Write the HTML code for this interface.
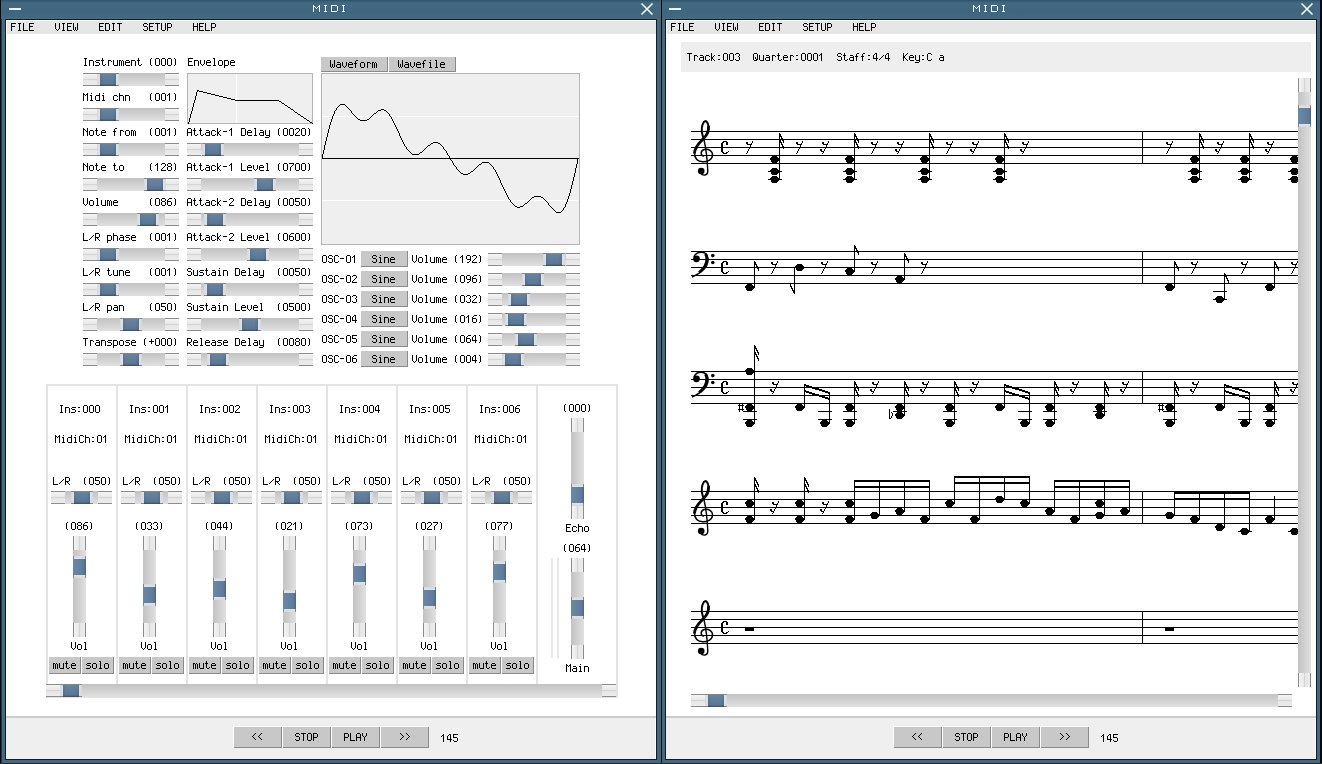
<!DOCTYPE html><html><head><meta charset="utf-8"><style>
*{margin:0;padding:0;box-sizing:content-box}
html,body{width:1322px;height:764px;overflow:hidden;background:#46687f;position:relative}
div{position:absolute}
.cap{border-top:1px solid #8c8c8c;border-bottom:1px solid #8c8c8c;background:linear-gradient(#f4f4f4 0%,#e8e8e8 45%,#d4d4d4 50%,#e6e6e6 55%,#ececec 100%)}
.vcap{border-left:1px solid #8c8c8c;border-right:1px solid #8c8c8c;background:linear-gradient(90deg,#f4f4f4 0%,#e8e8e8 45%,#d4d4d4 50%,#e6e6e6 55%,#ececec 100%)}
.knob{border-top:1px solid #858585;border-bottom:1px solid #858585;background:linear-gradient(90deg,#d4dae0,#eef2f6 35%,#eef2f6 65%,#d4dae0)}
.knob i{position:absolute;left:3px;top:0;width:16px;height:calc(100% + 1px);background:linear-gradient(90deg,rgba(0,0,0,.08),rgba(0,0,0,0) 20%,rgba(0,0,0,0) 80%,rgba(0,0,0,.1)),linear-gradient(#6683a0,#5b7794 80%,#4d627b 92%,#3a4555)}
.vknob{border-left:1px solid #858585;border-right:1px solid #858585;background:linear-gradient(#d4dae0,#eef2f6 35%,#eef2f6 65%,#d4dae0)}
.vknob i{position:absolute;top:3px;left:-1px;height:16px;width:calc(100% + 2px);background:linear-gradient(90deg,#6a88a6,#5f7b99 80%,#4e6480)}
.btn{background:#c8c8c8;border-right:1px solid #8a8a8a;border-bottom:1px solid #8a8a8a;box-shadow:-1px -1px 0 #fff}
</style></head><body><div style="left:0px;top:0px;width:1px;height:764px;background:#05080b;"></div>
<div style="left:661px;top:0px;width:1px;height:764px;background:#05080b;"></div>
<div style="left:1320px;top:0px;width:2px;height:764px;background:#05080b;"></div>
<div style="left:0px;top:763px;width:1322px;height:1px;background:#1c2d3a;"></div>
<div style="left:1px;top:0px;width:1px;height:764px;background:#22394a;"></div>
<div style="left:1px;top:0px;width:659px;height:19px;background:linear-gradient(#2c516b 0px,#3f637c 2px,#45697f 4px,#40667f 10px,#42677f 17px,#4e6c81 19px);"></div>
<div style="left:5px;top:19px;width:652px;height:741px;background:#0d1d29;"></div>
<div style="left:6px;top:20px;width:650px;height:739px;background:#ffffff;"></div>
<div style="left:7px;top:21px;width:649px;height:13px;background:#e6e6e6;"></div>
<div style="left:9px;top:8px;width:12px;height:2px;background:#e6fbff;"></div>
<div style="left:6px;top:716px;width:650px;height:2px;background:#cccccc;"></div>
<div style="left:6px;top:718px;width:649px;height:41px;background:#efefef;"></div>
<div class="btn" style="left:234px;top:727px;width:47px;height:20px"></div>
<div class="btn" style="left:283px;top:727px;width:47px;height:20px"></div>
<div class="btn" style="left:332px;top:727px;width:47px;height:20px"></div>
<div class="btn" style="left:381px;top:727px;width:47px;height:20px"></div>
<div style="left:662px;top:0px;width:658px;height:19px;background:linear-gradient(#2c516b 0px,#3f637c 2px,#45697f 4px,#40667f 10px,#42677f 17px,#4e6c81 19px);"></div>
<div style="left:665px;top:19px;width:652px;height:741px;background:#0d1d29;"></div>
<div style="left:666px;top:20px;width:650px;height:739px;background:#ffffff;"></div>
<div style="left:667px;top:21px;width:649px;height:13px;background:#e6e6e6;"></div>
<div style="left:669px;top:8px;width:12px;height:2px;background:#e6fbff;"></div>
<div style="left:666px;top:716px;width:650px;height:2px;background:#cccccc;"></div>
<div style="left:666px;top:718px;width:649px;height:41px;background:#efefef;"></div>
<div class="btn" style="left:894px;top:727px;width:47px;height:20px"></div>
<div class="btn" style="left:943px;top:727px;width:47px;height:20px"></div>
<div class="btn" style="left:992px;top:727px;width:47px;height:20px"></div>
<div class="btn" style="left:1041px;top:727px;width:47px;height:20px"></div>
<svg style="position:absolute;left:0;top:0" width="1322" height="20"><path d="M641.5 3.5 L652.5 14.5 M652.5 3.5 L641.5 14.5 M1301.5 3.5 L1312.5 14.5 M1312.5 3.5 L1301.5 14.5" stroke="#f2ffff" stroke-width="1.6"/></svg>
<div style="left:83px;top:73px;width:96px;height:13px;background:linear-gradient(#c2c2c2,#e0e0e0);"></div>
<div class="cap" style="left:83px;top:73px;width:14px;height:11px"></div>
<div class="cap" style="left:165px;top:73px;width:14px;height:11px"></div>
<div class="knob" style="left:97px;top:73px;width:22px;height:11px"><i></i></div>
<div style="left:83px;top:108px;width:96px;height:13px;background:linear-gradient(#c2c2c2,#e0e0e0);"></div>
<div class="cap" style="left:83px;top:108px;width:14px;height:11px"></div>
<div class="cap" style="left:165px;top:108px;width:14px;height:11px"></div>
<div class="knob" style="left:97px;top:108px;width:22px;height:11px"><i></i></div>
<div style="left:83px;top:143px;width:96px;height:13px;background:linear-gradient(#c2c2c2,#e0e0e0);"></div>
<div class="cap" style="left:83px;top:143px;width:14px;height:11px"></div>
<div class="cap" style="left:165px;top:143px;width:14px;height:11px"></div>
<div class="knob" style="left:97px;top:143px;width:22px;height:11px"><i></i></div>
<div style="left:83px;top:178px;width:96px;height:13px;background:linear-gradient(#c2c2c2,#e0e0e0);"></div>
<div class="cap" style="left:83px;top:178px;width:14px;height:11px"></div>
<div class="cap" style="left:165px;top:178px;width:14px;height:11px"></div>
<div class="knob" style="left:144px;top:178px;width:22px;height:11px"><i></i></div>
<div style="left:83px;top:213px;width:96px;height:13px;background:linear-gradient(#c2c2c2,#e0e0e0);"></div>
<div class="cap" style="left:83px;top:213px;width:14px;height:11px"></div>
<div class="cap" style="left:165px;top:213px;width:14px;height:11px"></div>
<div class="knob" style="left:137px;top:213px;width:22px;height:11px"><i></i></div>
<div style="left:83px;top:248px;width:96px;height:13px;background:linear-gradient(#c2c2c2,#e0e0e0);"></div>
<div class="cap" style="left:83px;top:248px;width:14px;height:11px"></div>
<div class="cap" style="left:165px;top:248px;width:14px;height:11px"></div>
<div class="knob" style="left:97px;top:248px;width:22px;height:11px"><i></i></div>
<div style="left:83px;top:283px;width:96px;height:13px;background:linear-gradient(#c2c2c2,#e0e0e0);"></div>
<div class="cap" style="left:83px;top:283px;width:14px;height:11px"></div>
<div class="cap" style="left:165px;top:283px;width:14px;height:11px"></div>
<div class="knob" style="left:97px;top:283px;width:22px;height:11px"><i></i></div>
<div style="left:83px;top:318px;width:96px;height:13px;background:linear-gradient(#c2c2c2,#e0e0e0);"></div>
<div class="cap" style="left:83px;top:318px;width:14px;height:11px"></div>
<div class="cap" style="left:165px;top:318px;width:14px;height:11px"></div>
<div class="knob" style="left:120px;top:318px;width:22px;height:11px"><i></i></div>
<div style="left:83px;top:353px;width:96px;height:13px;background:linear-gradient(#c2c2c2,#e0e0e0);"></div>
<div class="cap" style="left:83px;top:353px;width:14px;height:11px"></div>
<div class="cap" style="left:165px;top:353px;width:14px;height:11px"></div>
<div class="knob" style="left:120px;top:353px;width:22px;height:11px"><i></i></div>
<div style="left:187px;top:143px;width:126px;height:13px;background:linear-gradient(#c2c2c2,#e0e0e0);"></div>
<div class="cap" style="left:187px;top:143px;width:14px;height:11px"></div>
<div class="cap" style="left:299px;top:143px;width:14px;height:11px"></div>
<div class="knob" style="left:202px;top:143px;width:22px;height:11px"><i></i></div>
<div style="left:187px;top:178px;width:126px;height:13px;background:linear-gradient(#c2c2c2,#e0e0e0);"></div>
<div class="cap" style="left:187px;top:178px;width:14px;height:11px"></div>
<div class="cap" style="left:299px;top:178px;width:14px;height:11px"></div>
<div class="knob" style="left:254px;top:178px;width:22px;height:11px"><i></i></div>
<div style="left:187px;top:213px;width:126px;height:13px;background:linear-gradient(#c2c2c2,#e0e0e0);"></div>
<div class="cap" style="left:187px;top:213px;width:14px;height:11px"></div>
<div class="cap" style="left:299px;top:213px;width:14px;height:11px"></div>
<div class="knob" style="left:204px;top:213px;width:22px;height:11px"><i></i></div>
<div style="left:187px;top:248px;width:126px;height:13px;background:linear-gradient(#c2c2c2,#e0e0e0);"></div>
<div class="cap" style="left:187px;top:248px;width:14px;height:11px"></div>
<div class="cap" style="left:299px;top:248px;width:14px;height:11px"></div>
<div class="knob" style="left:247px;top:248px;width:22px;height:11px"><i></i></div>
<div style="left:187px;top:283px;width:126px;height:13px;background:linear-gradient(#c2c2c2,#e0e0e0);"></div>
<div class="cap" style="left:187px;top:283px;width:14px;height:11px"></div>
<div class="cap" style="left:299px;top:283px;width:14px;height:11px"></div>
<div class="knob" style="left:204px;top:283px;width:22px;height:11px"><i></i></div>
<div style="left:187px;top:318px;width:126px;height:13px;background:linear-gradient(#c2c2c2,#e0e0e0);"></div>
<div class="cap" style="left:187px;top:318px;width:14px;height:11px"></div>
<div class="cap" style="left:299px;top:318px;width:14px;height:11px"></div>
<div class="knob" style="left:239px;top:318px;width:22px;height:11px"><i></i></div>
<div style="left:187px;top:353px;width:126px;height:13px;background:linear-gradient(#c2c2c2,#e0e0e0);"></div>
<div class="cap" style="left:187px;top:353px;width:14px;height:11px"></div>
<div class="cap" style="left:299px;top:353px;width:14px;height:11px"></div>
<div class="knob" style="left:207px;top:353px;width:22px;height:11px"><i></i></div>
<div style="left:187px;top:73px;width:124px;height:49px;background:#efefef;border:1px solid #b4b4b4"></div>
<div style="left:236px;top:74px;width:1px;height:49px;background:#ffffff;"></div>
<div class="btn" style="left:321px;top:57px;width:66px;height:14px"></div>
<div class="btn" style="left:389px;top:57px;width:66px;height:14px"></div>
<div style="left:321px;top:73px;width:257px;height:170px;background:#efefef;border:1px solid #b4b4b4"></div>
<div style="left:322px;top:116px;width:257px;height:1px;background:#ffffff;"></div>
<div style="left:322px;top:200px;width:257px;height:1px;background:#ffffff;"></div>
<div class="btn" style="left:361px;top:251px;width:46px;height:15px"></div>
<div style="left:488px;top:253px;width:92px;height:13px;background:linear-gradient(#c2c2c2,#e0e0e0);"></div>
<div class="cap" style="left:488px;top:253px;width:14px;height:11px"></div>
<div class="cap" style="left:566px;top:253px;width:14px;height:11px"></div>
<div class="knob" style="left:543px;top:253px;width:22px;height:11px"><i></i></div>
<div class="btn" style="left:361px;top:271px;width:46px;height:15px"></div>
<div style="left:488px;top:273px;width:92px;height:13px;background:linear-gradient(#c2c2c2,#e0e0e0);"></div>
<div class="cap" style="left:488px;top:273px;width:14px;height:11px"></div>
<div class="cap" style="left:566px;top:273px;width:14px;height:11px"></div>
<div class="knob" style="left:522px;top:273px;width:22px;height:11px"><i></i></div>
<div class="btn" style="left:361px;top:291px;width:46px;height:15px"></div>
<div style="left:488px;top:293px;width:92px;height:13px;background:linear-gradient(#c2c2c2,#e0e0e0);"></div>
<div class="cap" style="left:488px;top:293px;width:14px;height:11px"></div>
<div class="cap" style="left:566px;top:293px;width:14px;height:11px"></div>
<div class="knob" style="left:508px;top:293px;width:22px;height:11px"><i></i></div>
<div class="btn" style="left:361px;top:311px;width:46px;height:15px"></div>
<div style="left:488px;top:313px;width:92px;height:13px;background:linear-gradient(#c2c2c2,#e0e0e0);"></div>
<div class="cap" style="left:488px;top:313px;width:14px;height:11px"></div>
<div class="cap" style="left:566px;top:313px;width:14px;height:11px"></div>
<div class="knob" style="left:505px;top:313px;width:22px;height:11px"><i></i></div>
<div class="btn" style="left:361px;top:331px;width:46px;height:15px"></div>
<div style="left:488px;top:333px;width:92px;height:13px;background:linear-gradient(#c2c2c2,#e0e0e0);"></div>
<div class="cap" style="left:488px;top:333px;width:14px;height:11px"></div>
<div class="cap" style="left:566px;top:333px;width:14px;height:11px"></div>
<div class="knob" style="left:515px;top:333px;width:22px;height:11px"><i></i></div>
<div class="btn" style="left:361px;top:351px;width:46px;height:15px"></div>
<div style="left:488px;top:353px;width:92px;height:13px;background:linear-gradient(#c2c2c2,#e0e0e0);"></div>
<div class="cap" style="left:488px;top:353px;width:14px;height:11px"></div>
<div class="cap" style="left:566px;top:353px;width:14px;height:11px"></div>
<div class="knob" style="left:502px;top:353px;width:22px;height:11px"><i></i></div>
<div style="left:46px;top:384px;width:568px;height:310px;background:#ffffff;border:2px solid #e4e4e4"></div>
<div style="left:51px;top:491px;width:61px;height:13px;background:linear-gradient(#c2c2c2,#e0e0e0);"></div>
<div class="cap" style="left:51px;top:491px;width:14px;height:11px"></div>
<div class="cap" style="left:98px;top:491px;width:14px;height:11px"></div>
<div class="knob" style="left:71px;top:491px;width:22px;height:11px"><i></i></div>
<div style="left:73px;top:536px;width:13px;height:101px;background:linear-gradient(90deg,#c2c2c2,#e0e0e0);"></div>
<div class="vcap" style="left:73px;top:536px;width:11px;height:14px"></div>
<div class="vcap" style="left:73px;top:623px;width:11px;height:14px"></div>
<div class="vknob" style="left:73px;top:556px;width:11px;height:22px"><i></i></div>
<div class="btn" style="left:49px;top:657px;width:31px;height:16px"></div>
<div class="btn" style="left:82px;top:657px;width:31px;height:16px"></div>
<div style="left:116px;top:386px;width:2px;height:298px;background:#e4e4e4;"></div>
<div style="left:121px;top:491px;width:61px;height:13px;background:linear-gradient(#c2c2c2,#e0e0e0);"></div>
<div class="cap" style="left:121px;top:491px;width:14px;height:11px"></div>
<div class="cap" style="left:168px;top:491px;width:14px;height:11px"></div>
<div class="knob" style="left:141px;top:491px;width:22px;height:11px"><i></i></div>
<div style="left:143px;top:536px;width:13px;height:101px;background:linear-gradient(90deg,#c2c2c2,#e0e0e0);"></div>
<div class="vcap" style="left:143px;top:536px;width:11px;height:14px"></div>
<div class="vcap" style="left:143px;top:623px;width:11px;height:14px"></div>
<div class="vknob" style="left:143px;top:584px;width:11px;height:22px"><i></i></div>
<div class="btn" style="left:119px;top:657px;width:31px;height:16px"></div>
<div class="btn" style="left:152px;top:657px;width:31px;height:16px"></div>
<div style="left:186px;top:386px;width:2px;height:298px;background:#e4e4e4;"></div>
<div style="left:191px;top:491px;width:61px;height:13px;background:linear-gradient(#c2c2c2,#e0e0e0);"></div>
<div class="cap" style="left:191px;top:491px;width:14px;height:11px"></div>
<div class="cap" style="left:238px;top:491px;width:14px;height:11px"></div>
<div class="knob" style="left:211px;top:491px;width:22px;height:11px"><i></i></div>
<div style="left:213px;top:536px;width:13px;height:101px;background:linear-gradient(90deg,#c2c2c2,#e0e0e0);"></div>
<div class="vcap" style="left:213px;top:536px;width:11px;height:14px"></div>
<div class="vcap" style="left:213px;top:623px;width:11px;height:14px"></div>
<div class="vknob" style="left:213px;top:578px;width:11px;height:22px"><i></i></div>
<div class="btn" style="left:189px;top:657px;width:31px;height:16px"></div>
<div class="btn" style="left:222px;top:657px;width:31px;height:16px"></div>
<div style="left:256px;top:386px;width:2px;height:298px;background:#e4e4e4;"></div>
<div style="left:261px;top:491px;width:61px;height:13px;background:linear-gradient(#c2c2c2,#e0e0e0);"></div>
<div class="cap" style="left:261px;top:491px;width:14px;height:11px"></div>
<div class="cap" style="left:308px;top:491px;width:14px;height:11px"></div>
<div class="knob" style="left:281px;top:491px;width:22px;height:11px"><i></i></div>
<div style="left:283px;top:536px;width:13px;height:101px;background:linear-gradient(90deg,#c2c2c2,#e0e0e0);"></div>
<div class="vcap" style="left:283px;top:536px;width:11px;height:14px"></div>
<div class="vcap" style="left:283px;top:623px;width:11px;height:14px"></div>
<div class="vknob" style="left:283px;top:590px;width:11px;height:22px"><i></i></div>
<div class="btn" style="left:259px;top:657px;width:31px;height:16px"></div>
<div class="btn" style="left:292px;top:657px;width:31px;height:16px"></div>
<div style="left:326px;top:386px;width:2px;height:298px;background:#e4e4e4;"></div>
<div style="left:331px;top:491px;width:61px;height:13px;background:linear-gradient(#c2c2c2,#e0e0e0);"></div>
<div class="cap" style="left:331px;top:491px;width:14px;height:11px"></div>
<div class="cap" style="left:378px;top:491px;width:14px;height:11px"></div>
<div class="knob" style="left:351px;top:491px;width:22px;height:11px"><i></i></div>
<div style="left:353px;top:536px;width:13px;height:101px;background:linear-gradient(90deg,#c2c2c2,#e0e0e0);"></div>
<div class="vcap" style="left:353px;top:536px;width:11px;height:14px"></div>
<div class="vcap" style="left:353px;top:623px;width:11px;height:14px"></div>
<div class="vknob" style="left:353px;top:563px;width:11px;height:22px"><i></i></div>
<div class="btn" style="left:329px;top:657px;width:31px;height:16px"></div>
<div class="btn" style="left:362px;top:657px;width:31px;height:16px"></div>
<div style="left:396px;top:386px;width:2px;height:298px;background:#e4e4e4;"></div>
<div style="left:401px;top:491px;width:61px;height:13px;background:linear-gradient(#c2c2c2,#e0e0e0);"></div>
<div class="cap" style="left:401px;top:491px;width:14px;height:11px"></div>
<div class="cap" style="left:448px;top:491px;width:14px;height:11px"></div>
<div class="knob" style="left:421px;top:491px;width:22px;height:11px"><i></i></div>
<div style="left:423px;top:536px;width:13px;height:101px;background:linear-gradient(90deg,#c2c2c2,#e0e0e0);"></div>
<div class="vcap" style="left:423px;top:536px;width:11px;height:14px"></div>
<div class="vcap" style="left:423px;top:623px;width:11px;height:14px"></div>
<div class="vknob" style="left:423px;top:587px;width:11px;height:22px"><i></i></div>
<div class="btn" style="left:399px;top:657px;width:31px;height:16px"></div>
<div class="btn" style="left:432px;top:657px;width:31px;height:16px"></div>
<div style="left:466px;top:386px;width:2px;height:298px;background:#e4e4e4;"></div>
<div style="left:471px;top:491px;width:61px;height:13px;background:linear-gradient(#c2c2c2,#e0e0e0);"></div>
<div class="cap" style="left:471px;top:491px;width:14px;height:11px"></div>
<div class="cap" style="left:518px;top:491px;width:14px;height:11px"></div>
<div class="knob" style="left:491px;top:491px;width:22px;height:11px"><i></i></div>
<div style="left:493px;top:536px;width:13px;height:101px;background:linear-gradient(90deg,#c2c2c2,#e0e0e0);"></div>
<div class="vcap" style="left:493px;top:536px;width:11px;height:14px"></div>
<div class="vcap" style="left:493px;top:623px;width:11px;height:14px"></div>
<div class="vknob" style="left:493px;top:561px;width:11px;height:22px"><i></i></div>
<div class="btn" style="left:469px;top:657px;width:31px;height:16px"></div>
<div class="btn" style="left:502px;top:657px;width:31px;height:16px"></div>
<div style="left:536px;top:386px;width:2px;height:298px;background:#e4e4e4;"></div>
<div style="left:571px;top:418px;width:13px;height:101px;background:linear-gradient(90deg,#c2c2c2,#e0e0e0);"></div>
<div class="vcap" style="left:571px;top:418px;width:11px;height:14px"></div>
<div class="vcap" style="left:571px;top:505px;width:11px;height:14px"></div>
<div class="vknob" style="left:571px;top:484px;width:11px;height:22px"><i></i></div>
<div style="left:571px;top:558px;width:13px;height:101px;background:linear-gradient(90deg,#c2c2c2,#e0e0e0);"></div>
<div class="vcap" style="left:571px;top:558px;width:11px;height:14px"></div>
<div class="vcap" style="left:571px;top:645px;width:11px;height:14px"></div>
<div class="vknob" style="left:571px;top:597px;width:11px;height:22px"><i></i></div>
<div style="left:551px;top:558px;width:2px;height:100px;background:#e8e8e8;"></div>
<div style="left:557px;top:558px;width:2px;height:100px;background:#e8e8e8;"></div>
<div style="left:46px;top:684px;width:570px;height:13px;background:linear-gradient(#c2c2c2,#e0e0e0);"></div>
<div class="cap" style="left:46px;top:684px;width:14px;height:11px"></div>
<div class="cap" style="left:602px;top:684px;width:14px;height:11px"></div>
<div class="knob" style="left:60px;top:684px;width:22px;height:11px"><i></i></div>
<svg style="position:absolute;left:0;top:0" width="1322" height="764"><path shape-rendering="crispEdges" fill="#000" d="M691 131h607v1h-607zM1142 132h1v1h-1zM779 133h1v1h-1zM854 133h1v1h-1zM929 133h1v1h-1zM1004 133h1v1h-1zM1142 133h1v1h-1zM1199 133h1v1h-1zM1249 133h1v1h-1zM779 134h2v1h-2zM854 134h2v1h-2zM929 134h2v1h-2zM1004 134h2v1h-2zM1142 134h1v1h-1zM1199 134h2v1h-2zM1249 134h2v1h-2zM779 135h2v1h-2zM854 135h2v1h-2zM929 135h2v1h-2zM1004 135h2v1h-2zM1142 135h1v1h-1zM1199 135h2v1h-2zM1249 135h2v1h-2zM779 136h3v1h-3zM854 136h3v1h-3zM929 136h3v1h-3zM1004 136h3v1h-3zM1142 136h1v1h-1zM1199 136h3v1h-3zM1249 136h3v1h-3zM779 137h1v1h-1zM781 137h1v1h-1zM854 137h1v1h-1zM856 137h1v1h-1zM929 137h1v1h-1zM931 137h1v1h-1zM1004 137h1v1h-1zM1006 137h1v1h-1zM1142 137h1v1h-1zM1199 137h1v1h-1zM1201 137h1v1h-1zM1249 137h1v1h-1zM1251 137h1v1h-1zM779 138h1v1h-1zM781 138h2v1h-2zM854 138h1v1h-1zM856 138h2v1h-2zM929 138h1v1h-1zM931 138h2v1h-2zM1004 138h1v1h-1zM1006 138h2v1h-2zM1142 138h1v1h-1zM1199 138h1v1h-1zM1201 138h2v1h-2zM1249 138h1v1h-1zM1251 138h2v1h-2zM691 139h607v1h-607zM779 140h2v1h-2zM782 140h2v1h-2zM854 140h2v1h-2zM857 140h2v1h-2zM929 140h2v1h-2zM932 140h2v1h-2zM1004 140h2v1h-2zM1007 140h2v1h-2zM1142 140h1v1h-1zM1199 140h2v1h-2zM1202 140h2v1h-2zM1249 140h2v1h-2zM1252 140h2v1h-2zM723 141h4v1h-4zM752 141h1v1h-1zM779 141h2v1h-2zM783 141h1v1h-1zM802 141h1v1h-1zM828 141h1v1h-1zM854 141h2v1h-2zM858 141h1v1h-1zM877 141h1v1h-1zM903 141h1v1h-1zM929 141h2v1h-2zM933 141h1v1h-1zM952 141h1v1h-1zM978 141h1v1h-1zM1004 141h2v1h-2zM1008 141h1v1h-1zM1028 141h1v1h-1zM1142 141h1v1h-1zM1172 141h1v1h-1zM1199 141h2v1h-2zM1203 141h1v1h-1zM1223 141h1v1h-1zM1249 141h2v1h-2zM1253 141h1v1h-1zM1273 141h1v1h-1zM722 142h2v1h-2zM726 142h2v1h-2zM746 142h2v1h-2zM752 142h1v1h-1zM779 142h3v1h-3zM783 142h1v1h-1zM796 142h2v1h-2zM802 142h1v1h-1zM822 142h2v1h-2zM828 142h1v1h-1zM854 142h3v1h-3zM858 142h1v1h-1zM871 142h2v1h-2zM877 142h1v1h-1zM897 142h2v1h-2zM903 142h1v1h-1zM929 142h3v1h-3zM933 142h1v1h-1zM946 142h2v1h-2zM952 142h1v1h-1zM972 142h2v1h-2zM978 142h1v1h-1zM1004 142h3v1h-3zM1008 142h1v1h-1zM1022 142h2v1h-2zM1028 142h1v1h-1zM1142 142h1v1h-1zM1166 142h2v1h-2zM1172 142h1v1h-1zM1199 142h3v1h-3zM1203 142h1v1h-1zM1217 142h2v1h-2zM1223 142h1v1h-1zM1249 142h3v1h-3zM1253 142h1v1h-1zM1267 142h2v1h-2zM1273 142h1v1h-1zM721 143h2v1h-2zM726 143h2v1h-2zM746 143h2v1h-2zM751 143h1v1h-1zM779 143h1v1h-1zM781 143h1v1h-1zM796 143h2v1h-2zM801 143h1v1h-1zM822 143h2v1h-2zM827 143h1v1h-1zM854 143h1v1h-1zM856 143h1v1h-1zM871 143h2v1h-2zM876 143h1v1h-1zM897 143h2v1h-2zM902 143h1v1h-1zM929 143h1v1h-1zM931 143h1v1h-1zM946 143h2v1h-2zM951 143h1v1h-1zM972 143h2v1h-2zM977 143h1v1h-1zM1004 143h1v1h-1zM1006 143h1v1h-1zM1022 143h2v1h-2zM1027 143h1v1h-1zM1142 143h1v1h-1zM1166 143h2v1h-2zM1171 143h1v1h-1zM1199 143h1v1h-1zM1201 143h1v1h-1zM1217 143h2v1h-2zM1222 143h1v1h-1zM1249 143h1v1h-1zM1251 143h1v1h-1zM1267 143h2v1h-2zM1272 143h1v1h-1zM721 144h2v1h-2zM726 144h2v1h-2zM747 144h5v1h-5zM779 144h1v1h-1zM781 144h2v1h-2zM797 144h5v1h-5zM823 144h5v1h-5zM854 144h1v1h-1zM856 144h2v1h-2zM872 144h5v1h-5zM898 144h5v1h-5zM929 144h1v1h-1zM931 144h2v1h-2zM947 144h5v1h-5zM973 144h5v1h-5zM1004 144h1v1h-1zM1006 144h2v1h-2zM1023 144h5v1h-5zM1142 144h1v1h-1zM1167 144h5v1h-5zM1199 144h1v1h-1zM1201 144h2v1h-2zM1218 144h5v1h-5zM1249 144h1v1h-1zM1251 144h2v1h-2zM1268 144h5v1h-5zM721 145h2v1h-2zM750 145h1v1h-1zM779 145h1v1h-1zM782 145h1v1h-1zM800 145h1v1h-1zM826 145h1v1h-1zM854 145h1v1h-1zM857 145h1v1h-1zM875 145h1v1h-1zM901 145h1v1h-1zM929 145h1v1h-1zM932 145h1v1h-1zM950 145h1v1h-1zM976 145h1v1h-1zM1004 145h1v1h-1zM1007 145h1v1h-1zM1026 145h1v1h-1zM1142 145h1v1h-1zM1170 145h1v1h-1zM1199 145h1v1h-1zM1202 145h1v1h-1zM1221 145h1v1h-1zM1249 145h1v1h-1zM1252 145h1v1h-1zM1271 145h1v1h-1zM721 146h2v1h-2zM750 146h1v1h-1zM779 146h1v1h-1zM782 146h2v1h-2zM800 146h1v1h-1zM826 146h1v1h-1zM854 146h1v1h-1zM857 146h2v1h-2zM875 146h1v1h-1zM901 146h1v1h-1zM929 146h1v1h-1zM932 146h2v1h-2zM950 146h1v1h-1zM976 146h1v1h-1zM1004 146h1v1h-1zM1007 146h2v1h-2zM1026 146h1v1h-1zM1142 146h1v1h-1zM1170 146h1v1h-1zM1199 146h1v1h-1zM1202 146h2v1h-2zM1221 146h1v1h-1zM1249 146h1v1h-1zM1252 146h2v1h-2zM1271 146h1v1h-1zM691 147h607v1h-607zM721 148h2v1h-2zM749 148h1v1h-1zM779 148h1v1h-1zM783 148h1v1h-1zM799 148h1v1h-1zM825 148h1v1h-1zM854 148h1v1h-1zM858 148h1v1h-1zM874 148h1v1h-1zM900 148h1v1h-1zM929 148h1v1h-1zM933 148h1v1h-1zM949 148h1v1h-1zM975 148h1v1h-1zM1004 148h1v1h-1zM1008 148h1v1h-1zM1025 148h1v1h-1zM1142 148h1v1h-1zM1169 148h1v1h-1zM1199 148h1v1h-1zM1203 148h1v1h-1zM1220 148h1v1h-1zM1249 148h1v1h-1zM1253 148h1v1h-1zM1270 148h1v1h-1zM721 149h2v1h-2zM748 149h1v1h-1zM779 149h1v1h-1zM798 149h1v1h-1zM820 149h2v1h-2zM824 149h1v1h-1zM854 149h1v1h-1zM873 149h1v1h-1zM895 149h2v1h-2zM899 149h1v1h-1zM929 149h1v1h-1zM948 149h1v1h-1zM970 149h2v1h-2zM974 149h1v1h-1zM1004 149h1v1h-1zM1020 149h2v1h-2zM1024 149h1v1h-1zM1142 149h1v1h-1zM1168 149h1v1h-1zM1199 149h1v1h-1zM1215 149h2v1h-2zM1219 149h1v1h-1zM1249 149h1v1h-1zM1265 149h2v1h-2zM1269 149h1v1h-1zM721 150h2v1h-2zM748 150h1v1h-1zM779 150h1v1h-1zM798 150h1v1h-1zM820 150h2v1h-2zM824 150h1v1h-1zM854 150h1v1h-1zM873 150h1v1h-1zM895 150h2v1h-2zM899 150h1v1h-1zM929 150h1v1h-1zM948 150h1v1h-1zM970 150h2v1h-2zM974 150h1v1h-1zM1004 150h1v1h-1zM1020 150h2v1h-2zM1024 150h1v1h-1zM1142 150h1v1h-1zM1168 150h1v1h-1zM1199 150h1v1h-1zM1215 150h2v1h-2zM1219 150h1v1h-1zM1249 150h1v1h-1zM1265 150h2v1h-2zM1269 150h1v1h-1zM721 151h2v1h-2zM728 151h1v1h-1zM747 151h1v1h-1zM779 151h1v1h-1zM797 151h1v1h-1zM821 151h3v1h-3zM854 151h1v1h-1zM872 151h1v1h-1zM896 151h3v1h-3zM929 151h1v1h-1zM947 151h1v1h-1zM971 151h3v1h-3zM1004 151h1v1h-1zM1021 151h3v1h-3zM1142 151h1v1h-1zM1167 151h1v1h-1zM1199 151h1v1h-1zM1216 151h3v1h-3zM1249 151h1v1h-1zM1266 151h3v1h-3zM722 152h2v1h-2zM726 152h2v1h-2zM747 152h1v1h-1zM779 152h1v1h-1zM797 152h1v1h-1zM823 152h1v1h-1zM854 152h1v1h-1zM872 152h1v1h-1zM898 152h1v1h-1zM929 152h1v1h-1zM947 152h1v1h-1zM973 152h1v1h-1zM1004 152h1v1h-1zM1023 152h1v1h-1zM1142 152h1v1h-1zM1167 152h1v1h-1zM1199 152h1v1h-1zM1218 152h1v1h-1zM1249 152h1v1h-1zM1268 152h1v1h-1zM723 153h4v1h-4zM746 153h1v1h-1zM779 153h1v1h-1zM796 153h1v1h-1zM822 153h1v1h-1zM854 153h1v1h-1zM871 153h1v1h-1zM897 153h1v1h-1zM929 153h1v1h-1zM946 153h1v1h-1zM972 153h1v1h-1zM1004 153h1v1h-1zM1022 153h1v1h-1zM1142 153h1v1h-1zM1166 153h1v1h-1zM1199 153h1v1h-1zM1217 153h1v1h-1zM1249 153h1v1h-1zM1267 153h1v1h-1zM779 154h1v1h-1zM854 154h1v1h-1zM929 154h1v1h-1zM1004 154h1v1h-1zM1142 154h1v1h-1zM1199 154h1v1h-1zM1249 154h1v1h-1zM691 155h607v1h-607zM772 156h5v1h-5zM779 156h1v1h-1zM847 156h5v1h-5zM854 156h1v1h-1zM922 156h5v1h-5zM929 156h1v1h-1zM997 156h5v1h-5zM1004 156h1v1h-1zM1142 156h1v1h-1zM1192 156h5v1h-5zM1199 156h1v1h-1zM1242 156h5v1h-5zM1249 156h1v1h-1zM1292 156h5v1h-5zM771 157h7v1h-7zM779 157h1v1h-1zM846 157h7v1h-7zM854 157h1v1h-1zM921 157h7v1h-7zM929 157h1v1h-1zM996 157h7v1h-7zM1004 157h1v1h-1zM1142 157h1v1h-1zM1191 157h7v1h-7zM1199 157h1v1h-1zM1241 157h7v1h-7zM1249 157h1v1h-1zM1291 157h7v1h-7zM770 158h10v1h-10zM845 158h10v1h-10zM920 158h10v1h-10zM995 158h10v1h-10zM1142 158h1v1h-1zM1190 158h10v1h-10zM1240 158h10v1h-10zM1290 158h8v1h-8zM770 159h10v1h-10zM845 159h10v1h-10zM920 159h10v1h-10zM995 159h10v1h-10zM1142 159h1v1h-1zM1190 159h10v1h-10zM1240 159h10v1h-10zM1290 159h8v1h-8zM771 160h9v1h-9zM846 160h9v1h-9zM921 160h9v1h-9zM996 160h9v1h-9zM1142 160h1v1h-1zM1191 160h9v1h-9zM1241 160h9v1h-9zM1291 160h7v1h-7zM771 161h7v1h-7zM779 161h1v1h-1zM846 161h7v1h-7zM854 161h1v1h-1zM921 161h7v1h-7zM929 161h1v1h-1zM996 161h7v1h-7zM1004 161h1v1h-1zM1142 161h1v1h-1zM1191 161h7v1h-7zM1199 161h1v1h-1zM1241 161h7v1h-7zM1249 161h1v1h-1zM1291 161h7v1h-7zM772 162h5v1h-5zM779 162h1v1h-1zM847 162h5v1h-5zM854 162h1v1h-1zM922 162h5v1h-5zM929 162h1v1h-1zM997 162h5v1h-5zM1004 162h1v1h-1zM1142 162h1v1h-1zM1192 162h5v1h-5zM1199 162h1v1h-1zM1242 162h5v1h-5zM1249 162h1v1h-1zM1292 162h5v1h-5zM691 163h607v1h-607zM779 164h1v1h-1zM854 164h1v1h-1zM929 164h1v1h-1zM1004 164h1v1h-1zM1199 164h1v1h-1zM1249 164h1v1h-1zM779 165h1v1h-1zM854 165h1v1h-1zM929 165h1v1h-1zM1004 165h1v1h-1zM1199 165h1v1h-1zM1249 165h1v1h-1zM779 166h1v1h-1zM854 166h1v1h-1zM929 166h1v1h-1zM1004 166h1v1h-1zM1199 166h1v1h-1zM1249 166h1v1h-1zM779 167h1v1h-1zM854 167h1v1h-1zM929 167h1v1h-1zM1004 167h1v1h-1zM1199 167h1v1h-1zM1249 167h1v1h-1zM772 168h5v1h-5zM779 168h1v1h-1zM847 168h5v1h-5zM854 168h1v1h-1zM922 168h5v1h-5zM929 168h1v1h-1zM997 168h5v1h-5zM1004 168h1v1h-1zM1192 168h5v1h-5zM1199 168h1v1h-1zM1242 168h5v1h-5zM1249 168h1v1h-1zM1292 168h5v1h-5zM771 169h7v1h-7zM779 169h1v1h-1zM846 169h7v1h-7zM854 169h1v1h-1zM921 169h7v1h-7zM929 169h1v1h-1zM996 169h7v1h-7zM1004 169h1v1h-1zM1191 169h7v1h-7zM1199 169h1v1h-1zM1241 169h7v1h-7zM1249 169h1v1h-1zM1291 169h7v1h-7zM770 170h10v1h-10zM845 170h10v1h-10zM920 170h10v1h-10zM995 170h10v1h-10zM1190 170h10v1h-10zM1240 170h10v1h-10zM1290 170h8v1h-8zM768 171h14v1h-14zM843 171h14v1h-14zM918 171h14v1h-14zM993 171h14v1h-14zM1188 171h14v1h-14zM1238 171h14v1h-14zM1288 171h10v1h-10zM771 172h9v1h-9zM846 172h9v1h-9zM921 172h9v1h-9zM996 172h9v1h-9zM1191 172h9v1h-9zM1241 172h9v1h-9zM1291 172h7v1h-7zM771 173h7v1h-7zM779 173h1v1h-1zM846 173h7v1h-7zM854 173h1v1h-1zM921 173h7v1h-7zM929 173h1v1h-1zM996 173h7v1h-7zM1004 173h1v1h-1zM1191 173h7v1h-7zM1199 173h1v1h-1zM1241 173h7v1h-7zM1249 173h1v1h-1zM1291 173h7v1h-7zM772 174h5v1h-5zM779 174h1v1h-1zM847 174h5v1h-5zM854 174h1v1h-1zM922 174h5v1h-5zM929 174h1v1h-1zM997 174h5v1h-5zM1004 174h1v1h-1zM1192 174h5v1h-5zM1199 174h1v1h-1zM1242 174h5v1h-5zM1249 174h1v1h-1zM1292 174h5v1h-5zM779 175h1v1h-1zM854 175h1v1h-1zM929 175h1v1h-1zM1004 175h1v1h-1zM1199 175h1v1h-1zM1249 175h1v1h-1zM772 176h5v1h-5zM779 176h1v1h-1zM847 176h5v1h-5zM854 176h1v1h-1zM922 176h5v1h-5zM929 176h1v1h-1zM997 176h5v1h-5zM1004 176h1v1h-1zM1192 176h5v1h-5zM1199 176h1v1h-1zM1242 176h5v1h-5zM1249 176h1v1h-1zM1292 176h5v1h-5zM771 177h7v1h-7zM779 177h1v1h-1zM846 177h7v1h-7zM854 177h1v1h-1zM921 177h7v1h-7zM929 177h1v1h-1zM996 177h7v1h-7zM1004 177h1v1h-1zM1191 177h7v1h-7zM1199 177h1v1h-1zM1241 177h7v1h-7zM1249 177h1v1h-1zM1291 177h7v1h-7zM770 178h10v1h-10zM845 178h10v1h-10zM920 178h10v1h-10zM995 178h10v1h-10zM1190 178h10v1h-10zM1240 178h10v1h-10zM1290 178h8v1h-8zM768 179h14v1h-14zM843 179h14v1h-14zM918 179h14v1h-14zM993 179h14v1h-14zM1188 179h14v1h-14zM1238 179h14v1h-14zM1288 179h10v1h-10zM771 180h8v1h-8zM846 180h8v1h-8zM921 180h8v1h-8zM996 180h8v1h-8zM1191 180h8v1h-8zM1241 180h8v1h-8zM1291 180h7v1h-7zM771 181h7v1h-7zM846 181h7v1h-7zM921 181h7v1h-7zM996 181h7v1h-7zM1191 181h7v1h-7zM1241 181h7v1h-7zM1291 181h7v1h-7zM772 182h5v1h-5zM847 182h5v1h-5zM922 182h5v1h-5zM997 182h5v1h-5zM1192 182h5v1h-5zM1242 182h5v1h-5zM1292 182h5v1h-5zM854 245h1v1h-1zM854 246h2v1h-2zM854 247h2v1h-2zM854 248h3v1h-3zM854 249h1v1h-1zM856 249h1v1h-1zM854 250h1v1h-1zM856 250h2v1h-2zM691 251h607v1h-607zM854 252h1v1h-1zM857 252h2v1h-2zM1142 252h1v1h-1zM854 253h1v1h-1zM858 253h1v1h-1zM904 253h1v1h-1zM1142 253h1v1h-1zM854 254h1v1h-1zM858 254h1v1h-1zM904 254h2v1h-2zM1142 254h1v1h-1zM854 255h1v1h-1zM904 255h2v1h-2zM1142 255h1v1h-1zM854 256h1v1h-1zM904 256h3v1h-3zM1142 256h1v1h-1zM854 257h1v1h-1zM904 257h1v1h-1zM906 257h1v1h-1zM1142 257h1v1h-1zM854 258h1v1h-1zM904 258h1v1h-1zM906 258h2v1h-2zM1142 258h1v1h-1zM691 259h607v1h-607zM854 260h1v1h-1zM904 260h1v1h-1zM907 260h2v1h-2zM1142 260h1v1h-1zM723 261h4v1h-4zM754 261h1v1h-1zM777 261h1v1h-1zM827 261h1v1h-1zM854 261h1v1h-1zM877 261h1v1h-1zM904 261h1v1h-1zM908 261h1v1h-1zM927 261h1v1h-1zM1142 261h1v1h-1zM1174 261h1v1h-1zM1197 261h1v1h-1zM1247 261h1v1h-1zM1274 261h1v1h-1zM1297 261h1v1h-1zM722 262h2v1h-2zM726 262h2v1h-2zM754 262h2v1h-2zM771 262h2v1h-2zM777 262h1v1h-1zM821 262h2v1h-2zM827 262h1v1h-1zM854 262h1v1h-1zM871 262h2v1h-2zM877 262h1v1h-1zM904 262h1v1h-1zM908 262h1v1h-1zM921 262h2v1h-2zM927 262h1v1h-1zM1142 262h1v1h-1zM1174 262h2v1h-2zM1191 262h2v1h-2zM1197 262h1v1h-1zM1241 262h2v1h-2zM1247 262h1v1h-1zM1274 262h2v1h-2zM1291 262h2v1h-2zM1297 262h1v1h-1zM721 263h2v1h-2zM726 263h2v1h-2zM754 263h2v1h-2zM771 263h2v1h-2zM776 263h1v1h-1zM821 263h2v1h-2zM826 263h1v1h-1zM854 263h1v1h-1zM871 263h2v1h-2zM876 263h1v1h-1zM904 263h1v1h-1zM921 263h2v1h-2zM926 263h1v1h-1zM1142 263h1v1h-1zM1174 263h2v1h-2zM1191 263h2v1h-2zM1196 263h1v1h-1zM1241 263h2v1h-2zM1246 263h1v1h-1zM1274 263h2v1h-2zM1291 263h2v1h-2zM1296 263h1v1h-1zM721 264h2v1h-2zM726 264h2v1h-2zM754 264h3v1h-3zM772 264h5v1h-5zM797 264h5v1h-5zM822 264h5v1h-5zM854 264h1v1h-1zM872 264h5v1h-5zM904 264h1v1h-1zM922 264h5v1h-5zM1142 264h1v1h-1zM1174 264h3v1h-3zM1192 264h5v1h-5zM1242 264h5v1h-5zM1274 264h3v1h-3zM1292 264h5v1h-5zM721 265h2v1h-2zM754 265h1v1h-1zM756 265h1v1h-1zM775 265h1v1h-1zM796 265h7v1h-7zM825 265h1v1h-1zM854 265h1v1h-1zM875 265h1v1h-1zM904 265h1v1h-1zM925 265h1v1h-1zM1142 265h1v1h-1zM1174 265h1v1h-1zM1176 265h1v1h-1zM1195 265h1v1h-1zM1245 265h1v1h-1zM1274 265h1v1h-1zM1276 265h1v1h-1zM1295 265h1v1h-1zM721 266h2v1h-2zM754 266h1v1h-1zM756 266h2v1h-2zM775 266h1v1h-1zM795 266h9v1h-9zM825 266h1v1h-1zM854 266h1v1h-1zM875 266h1v1h-1zM904 266h1v1h-1zM925 266h1v1h-1zM1142 266h1v1h-1zM1174 266h1v1h-1zM1176 266h2v1h-2zM1195 266h1v1h-1zM1245 266h1v1h-1zM1274 266h1v1h-1zM1276 266h2v1h-2zM1295 266h1v1h-1zM691 267h607v1h-607zM721 268h2v1h-2zM754 268h1v1h-1zM757 268h2v1h-2zM774 268h1v1h-1zM794 268h1v1h-1zM796 268h8v1h-8zM824 268h1v1h-1zM847 268h5v1h-5zM854 268h1v1h-1zM874 268h1v1h-1zM904 268h1v1h-1zM924 268h1v1h-1zM1142 268h1v1h-1zM1174 268h1v1h-1zM1177 268h2v1h-2zM1194 268h1v1h-1zM1244 268h1v1h-1zM1274 268h1v1h-1zM1277 268h2v1h-2zM1294 268h1v1h-1zM721 269h2v1h-2zM754 269h1v1h-1zM758 269h1v1h-1zM773 269h1v1h-1zM794 269h1v1h-1zM796 269h7v1h-7zM823 269h1v1h-1zM846 269h7v1h-7zM854 269h1v1h-1zM873 269h1v1h-1zM904 269h1v1h-1zM923 269h1v1h-1zM1142 269h1v1h-1zM1174 269h1v1h-1zM1178 269h1v1h-1zM1193 269h1v1h-1zM1243 269h1v1h-1zM1274 269h1v1h-1zM1278 269h1v1h-1zM1293 269h1v1h-1zM721 270h2v1h-2zM754 270h1v1h-1zM758 270h1v1h-1zM773 270h1v1h-1zM794 270h1v1h-1zM797 270h5v1h-5zM823 270h1v1h-1zM845 270h10v1h-10zM873 270h1v1h-1zM904 270h1v1h-1zM923 270h1v1h-1zM1142 270h1v1h-1zM1174 270h1v1h-1zM1178 270h1v1h-1zM1193 270h1v1h-1zM1243 270h1v1h-1zM1274 270h1v1h-1zM1278 270h1v1h-1zM1293 270h1v1h-1zM721 271h2v1h-2zM728 271h1v1h-1zM754 271h1v1h-1zM772 271h1v1h-1zM794 271h1v1h-1zM822 271h1v1h-1zM845 271h10v1h-10zM872 271h1v1h-1zM904 271h1v1h-1zM922 271h1v1h-1zM1142 271h1v1h-1zM1174 271h1v1h-1zM1192 271h1v1h-1zM1242 271h1v1h-1zM1274 271h1v1h-1zM1292 271h1v1h-1zM722 272h2v1h-2zM726 272h2v1h-2zM754 272h1v1h-1zM772 272h1v1h-1zM794 272h1v1h-1zM822 272h1v1h-1zM846 272h8v1h-8zM872 272h1v1h-1zM904 272h1v1h-1zM922 272h1v1h-1zM1142 272h1v1h-1zM1174 272h1v1h-1zM1192 272h1v1h-1zM1242 272h1v1h-1zM1274 272h1v1h-1zM1292 272h1v1h-1zM723 273h4v1h-4zM754 273h1v1h-1zM771 273h1v1h-1zM794 273h1v1h-1zM821 273h1v1h-1zM846 273h7v1h-7zM871 273h1v1h-1zM904 273h1v1h-1zM921 273h1v1h-1zM1142 273h1v1h-1zM1174 273h1v1h-1zM1191 273h1v1h-1zM1224 273h1v1h-1zM1241 273h1v1h-1zM1274 273h1v1h-1zM1291 273h1v1h-1zM754 274h1v1h-1zM794 274h1v1h-1zM847 274h5v1h-5zM904 274h1v1h-1zM1142 274h1v1h-1zM1174 274h1v1h-1zM1224 274h2v1h-2zM1274 274h1v1h-1zM691 275h607v1h-607zM754 276h1v1h-1zM794 276h1v1h-1zM897 276h5v1h-5zM904 276h1v1h-1zM1142 276h1v1h-1zM1174 276h1v1h-1zM1224 276h3v1h-3zM1274 276h1v1h-1zM754 277h1v1h-1zM794 277h1v1h-1zM896 277h7v1h-7zM904 277h1v1h-1zM1142 277h1v1h-1zM1174 277h1v1h-1zM1224 277h1v1h-1zM1226 277h1v1h-1zM1274 277h1v1h-1zM754 278h1v1h-1zM794 278h1v1h-1zM895 278h10v1h-10zM1142 278h1v1h-1zM1174 278h1v1h-1zM1224 278h1v1h-1zM1226 278h2v1h-2zM1274 278h1v1h-1zM754 279h1v1h-1zM794 279h1v1h-1zM895 279h10v1h-10zM1142 279h1v1h-1zM1174 279h1v1h-1zM1224 279h1v1h-1zM1227 279h1v1h-1zM1274 279h1v1h-1zM754 280h1v1h-1zM794 280h1v1h-1zM896 280h8v1h-8zM1142 280h1v1h-1zM1174 280h1v1h-1zM1224 280h1v1h-1zM1227 280h2v1h-2zM1274 280h1v1h-1zM754 281h1v1h-1zM794 281h1v1h-1zM896 281h7v1h-7zM1142 281h1v1h-1zM1174 281h1v1h-1zM1224 281h1v1h-1zM1228 281h1v1h-1zM1274 281h1v1h-1zM754 282h1v1h-1zM794 282h1v1h-1zM897 282h5v1h-5zM1142 282h1v1h-1zM1174 282h1v1h-1zM1224 282h1v1h-1zM1228 282h1v1h-1zM1274 282h1v1h-1zM691 283h607v1h-607zM747 284h5v1h-5zM754 284h1v1h-1zM790 284h1v1h-1zM794 284h1v1h-1zM1167 284h5v1h-5zM1174 284h1v1h-1zM1224 284h1v1h-1zM1267 284h5v1h-5zM1274 284h1v1h-1zM746 285h7v1h-7zM754 285h1v1h-1zM790 285h1v1h-1zM794 285h1v1h-1zM1166 285h7v1h-7zM1174 285h1v1h-1zM1224 285h1v1h-1zM1266 285h7v1h-7zM1274 285h1v1h-1zM745 286h10v1h-10zM790 286h2v1h-2zM794 286h1v1h-1zM1165 286h10v1h-10zM1224 286h1v1h-1zM1265 286h10v1h-10zM745 287h10v1h-10zM791 287h1v1h-1zM794 287h1v1h-1zM1165 287h10v1h-10zM1224 287h1v1h-1zM1265 287h10v1h-10zM746 288h8v1h-8zM791 288h2v1h-2zM794 288h1v1h-1zM1166 288h8v1h-8zM1224 288h1v1h-1zM1266 288h8v1h-8zM746 289h7v1h-7zM792 289h1v1h-1zM794 289h1v1h-1zM1166 289h7v1h-7zM1224 289h1v1h-1zM1266 289h7v1h-7zM747 290h5v1h-5zM792 290h3v1h-3zM1167 290h5v1h-5zM1224 290h1v1h-1zM1267 290h5v1h-5zM793 291h2v1h-2zM1213 291h14v1h-14zM793 292h2v1h-2zM1224 292h1v1h-1zM794 293h1v1h-1zM1224 293h1v1h-1zM1224 294h1v1h-1zM1224 295h1v1h-1zM1217 296h5v1h-5zM1224 296h1v1h-1zM1216 297h7v1h-7zM1224 297h1v1h-1zM1215 298h10v1h-10zM1213 299h14v1h-14zM1216 300h8v1h-8zM1216 301h7v1h-7zM1217 302h5v1h-5zM754 345h1v1h-1zM754 346h2v1h-2zM754 347h2v1h-2zM754 348h3v1h-3zM754 349h1v1h-1zM756 349h1v1h-1zM754 350h1v1h-1zM756 350h2v1h-2zM754 351h1v1h-1zM757 351h1v1h-1zM754 352h2v1h-2zM757 352h2v1h-2zM754 353h2v1h-2zM758 353h1v1h-1zM754 354h3v1h-3zM758 354h1v1h-1zM754 355h1v1h-1zM756 355h1v1h-1zM754 356h1v1h-1zM756 356h2v1h-2zM754 357h1v1h-1zM757 357h1v1h-1zM754 358h1v1h-1zM757 358h2v1h-2zM754 359h1v1h-1zM758 359h1v1h-1zM754 360h1v1h-1zM758 360h1v1h-1zM754 361h1v1h-1zM754 362h1v1h-1zM754 363h1v1h-1zM754 364h1v1h-1zM754 365h1v1h-1zM754 366h1v1h-1zM754 367h1v1h-1zM747 368h5v1h-5zM754 368h1v1h-1zM746 369h7v1h-7zM754 369h1v1h-1zM745 370h10v1h-10zM691 371h607v1h-607zM746 372h9v1h-9zM1142 372h1v1h-1zM746 373h7v1h-7zM754 373h1v1h-1zM1142 373h1v1h-1zM747 374h5v1h-5zM754 374h1v1h-1zM1142 374h1v1h-1zM754 375h1v1h-1zM1142 375h1v1h-1zM754 376h1v1h-1zM1142 376h1v1h-1zM754 377h1v1h-1zM1142 377h1v1h-1zM754 378h1v1h-1zM1142 378h1v1h-1zM691 379h607v1h-607zM754 380h1v1h-1zM1142 380h1v1h-1zM723 381h4v1h-4zM754 381h1v1h-1zM778 381h1v1h-1zM854 381h1v1h-1zM878 381h1v1h-1zM904 381h1v1h-1zM928 381h1v1h-1zM954 381h1v1h-1zM978 381h1v1h-1zM1054 381h1v1h-1zM1078 381h1v1h-1zM1104 381h1v1h-1zM1128 381h1v1h-1zM1142 381h1v1h-1zM1174 381h1v1h-1zM1198 381h1v1h-1zM1274 381h1v1h-1zM722 382h2v1h-2zM726 382h2v1h-2zM754 382h1v1h-1zM772 382h2v1h-2zM778 382h1v1h-1zM854 382h2v1h-2zM872 382h2v1h-2zM878 382h1v1h-1zM904 382h2v1h-2zM922 382h2v1h-2zM928 382h1v1h-1zM954 382h2v1h-2zM972 382h2v1h-2zM978 382h1v1h-1zM1054 382h2v1h-2zM1072 382h2v1h-2zM1078 382h1v1h-1zM1104 382h2v1h-2zM1122 382h2v1h-2zM1128 382h1v1h-1zM1142 382h1v1h-1zM1174 382h2v1h-2zM1192 382h2v1h-2zM1198 382h1v1h-1zM1274 382h2v1h-2zM1292 382h2v1h-2zM721 383h2v1h-2zM726 383h2v1h-2zM754 383h1v1h-1zM772 383h2v1h-2zM777 383h1v1h-1zM854 383h2v1h-2zM872 383h2v1h-2zM877 383h1v1h-1zM904 383h2v1h-2zM922 383h2v1h-2zM927 383h1v1h-1zM954 383h2v1h-2zM972 383h2v1h-2zM977 383h1v1h-1zM1054 383h2v1h-2zM1072 383h2v1h-2zM1077 383h1v1h-1zM1104 383h2v1h-2zM1122 383h2v1h-2zM1127 383h1v1h-1zM1142 383h1v1h-1zM1174 383h2v1h-2zM1192 383h2v1h-2zM1197 383h1v1h-1zM1274 383h2v1h-2zM1292 383h2v1h-2zM1297 383h1v1h-1zM721 384h2v1h-2zM726 384h2v1h-2zM754 384h1v1h-1zM773 384h5v1h-5zM804 384h2v1h-2zM854 384h3v1h-3zM873 384h5v1h-5zM904 384h3v1h-3zM923 384h5v1h-5zM954 384h3v1h-3zM973 384h5v1h-5zM1004 384h2v1h-2zM1054 384h3v1h-3zM1073 384h5v1h-5zM1104 384h3v1h-3zM1123 384h5v1h-5zM1142 384h1v1h-1zM1174 384h3v1h-3zM1193 384h5v1h-5zM1224 384h2v1h-2zM1274 384h3v1h-3zM1293 384h5v1h-5zM721 385h2v1h-2zM754 385h1v1h-1zM776 385h1v1h-1zM804 385h5v1h-5zM854 385h1v1h-1zM856 385h1v1h-1zM876 385h1v1h-1zM904 385h1v1h-1zM906 385h1v1h-1zM926 385h1v1h-1zM954 385h1v1h-1zM956 385h1v1h-1zM976 385h1v1h-1zM1004 385h5v1h-5zM1054 385h1v1h-1zM1056 385h1v1h-1zM1076 385h1v1h-1zM1104 385h1v1h-1zM1106 385h1v1h-1zM1126 385h1v1h-1zM1142 385h1v1h-1zM1174 385h1v1h-1zM1176 385h1v1h-1zM1196 385h1v1h-1zM1224 385h5v1h-5zM1274 385h1v1h-1zM1276 385h1v1h-1zM1296 385h1v1h-1zM721 386h2v1h-2zM754 386h1v1h-1zM776 386h1v1h-1zM804 386h1v1h-1zM806 386h6v1h-6zM854 386h1v1h-1zM856 386h2v1h-2zM876 386h1v1h-1zM904 386h1v1h-1zM906 386h2v1h-2zM926 386h1v1h-1zM954 386h1v1h-1zM956 386h2v1h-2zM976 386h1v1h-1zM1004 386h1v1h-1zM1006 386h6v1h-6zM1054 386h1v1h-1zM1056 386h2v1h-2zM1076 386h1v1h-1zM1104 386h1v1h-1zM1106 386h2v1h-2zM1126 386h1v1h-1zM1142 386h1v1h-1zM1174 386h1v1h-1zM1176 386h2v1h-2zM1196 386h1v1h-1zM1224 386h1v1h-1zM1226 386h6v1h-6zM1274 386h1v1h-1zM1276 386h2v1h-2zM1296 386h1v1h-1zM691 387h607v1h-607zM721 388h2v1h-2zM754 388h1v1h-1zM775 388h1v1h-1zM804 388h1v1h-1zM812 388h7v1h-7zM854 388h2v1h-2zM857 388h2v1h-2zM875 388h1v1h-1zM904 388h2v1h-2zM907 388h2v1h-2zM925 388h1v1h-1zM954 388h2v1h-2zM957 388h2v1h-2zM975 388h1v1h-1zM1004 388h1v1h-1zM1012 388h7v1h-7zM1054 388h2v1h-2zM1057 388h2v1h-2zM1075 388h1v1h-1zM1104 388h2v1h-2zM1107 388h2v1h-2zM1125 388h1v1h-1zM1142 388h1v1h-1zM1174 388h2v1h-2zM1177 388h2v1h-2zM1195 388h1v1h-1zM1224 388h1v1h-1zM1232 388h7v1h-7zM1274 388h2v1h-2zM1277 388h2v1h-2zM1295 388h1v1h-1zM721 389h2v1h-2zM754 389h1v1h-1zM770 389h2v1h-2zM774 389h1v1h-1zM804 389h1v1h-1zM815 389h7v1h-7zM854 389h2v1h-2zM858 389h1v1h-1zM870 389h2v1h-2zM874 389h1v1h-1zM904 389h2v1h-2zM908 389h1v1h-1zM920 389h2v1h-2zM924 389h1v1h-1zM954 389h2v1h-2zM958 389h1v1h-1zM970 389h2v1h-2zM974 389h1v1h-1zM1004 389h1v1h-1zM1015 389h7v1h-7zM1054 389h2v1h-2zM1058 389h1v1h-1zM1070 389h2v1h-2zM1074 389h1v1h-1zM1104 389h2v1h-2zM1108 389h1v1h-1zM1120 389h2v1h-2zM1124 389h1v1h-1zM1142 389h1v1h-1zM1174 389h2v1h-2zM1178 389h1v1h-1zM1190 389h2v1h-2zM1194 389h1v1h-1zM1224 389h1v1h-1zM1235 389h7v1h-7zM1274 389h2v1h-2zM1278 389h1v1h-1zM1290 389h2v1h-2zM1294 389h1v1h-1zM721 390h2v1h-2zM754 390h1v1h-1zM770 390h2v1h-2zM774 390h1v1h-1zM804 390h2v1h-2zM819 390h6v1h-6zM854 390h3v1h-3zM858 390h1v1h-1zM870 390h2v1h-2zM874 390h1v1h-1zM904 390h3v1h-3zM908 390h1v1h-1zM920 390h2v1h-2zM924 390h1v1h-1zM954 390h3v1h-3zM958 390h1v1h-1zM970 390h2v1h-2zM974 390h1v1h-1zM1004 390h2v1h-2zM1019 390h6v1h-6zM1054 390h3v1h-3zM1058 390h1v1h-1zM1070 390h2v1h-2zM1074 390h1v1h-1zM1104 390h3v1h-3zM1108 390h1v1h-1zM1120 390h2v1h-2zM1124 390h1v1h-1zM1142 390h1v1h-1zM1174 390h3v1h-3zM1178 390h1v1h-1zM1190 390h2v1h-2zM1194 390h1v1h-1zM1224 390h2v1h-2zM1239 390h6v1h-6zM1274 390h3v1h-3zM1278 390h1v1h-1zM1290 390h2v1h-2zM1294 390h1v1h-1zM721 391h2v1h-2zM728 391h1v1h-1zM754 391h1v1h-1zM771 391h3v1h-3zM804 391h5v1h-5zM822 391h6v1h-6zM854 391h1v1h-1zM856 391h1v1h-1zM871 391h3v1h-3zM904 391h1v1h-1zM906 391h1v1h-1zM921 391h3v1h-3zM954 391h1v1h-1zM956 391h1v1h-1zM971 391h3v1h-3zM1004 391h5v1h-5zM1022 391h6v1h-6zM1054 391h1v1h-1zM1056 391h1v1h-1zM1071 391h3v1h-3zM1104 391h1v1h-1zM1106 391h1v1h-1zM1121 391h3v1h-3zM1142 391h1v1h-1zM1174 391h1v1h-1zM1176 391h1v1h-1zM1191 391h3v1h-3zM1224 391h5v1h-5zM1242 391h6v1h-6zM1274 391h1v1h-1zM1276 391h1v1h-1zM1291 391h3v1h-3zM722 392h2v1h-2zM726 392h2v1h-2zM754 392h1v1h-1zM773 392h1v1h-1zM804 392h1v1h-1zM806 392h6v1h-6zM825 392h5v1h-5zM854 392h1v1h-1zM856 392h2v1h-2zM873 392h1v1h-1zM904 392h1v1h-1zM906 392h2v1h-2zM923 392h1v1h-1zM954 392h1v1h-1zM956 392h2v1h-2zM973 392h1v1h-1zM1004 392h1v1h-1zM1006 392h6v1h-6zM1025 392h5v1h-5zM1054 392h1v1h-1zM1056 392h2v1h-2zM1073 392h1v1h-1zM1104 392h1v1h-1zM1106 392h2v1h-2zM1123 392h1v1h-1zM1142 392h1v1h-1zM1174 392h1v1h-1zM1176 392h2v1h-2zM1193 392h1v1h-1zM1224 392h1v1h-1zM1226 392h6v1h-6zM1245 392h5v1h-5zM1274 392h1v1h-1zM1276 392h2v1h-2zM1293 392h1v1h-1zM723 393h4v1h-4zM754 393h1v1h-1zM772 393h1v1h-1zM804 393h1v1h-1zM809 393h6v1h-6zM828 393h2v1h-2zM854 393h1v1h-1zM857 393h1v1h-1zM872 393h1v1h-1zM904 393h1v1h-1zM907 393h1v1h-1zM922 393h1v1h-1zM954 393h1v1h-1zM957 393h1v1h-1zM972 393h1v1h-1zM1004 393h1v1h-1zM1009 393h6v1h-6zM1028 393h2v1h-2zM1054 393h1v1h-1zM1057 393h1v1h-1zM1072 393h1v1h-1zM1104 393h1v1h-1zM1107 393h1v1h-1zM1122 393h1v1h-1zM1142 393h1v1h-1zM1174 393h1v1h-1zM1177 393h1v1h-1zM1192 393h1v1h-1zM1224 393h1v1h-1zM1229 393h6v1h-6zM1248 393h2v1h-2zM1274 393h1v1h-1zM1277 393h1v1h-1zM1292 393h1v1h-1zM754 394h1v1h-1zM804 394h1v1h-1zM812 394h7v1h-7zM829 394h1v1h-1zM854 394h1v1h-1zM857 394h2v1h-2zM904 394h1v1h-1zM907 394h2v1h-2zM954 394h1v1h-1zM957 394h2v1h-2zM1004 394h1v1h-1zM1012 394h7v1h-7zM1029 394h1v1h-1zM1054 394h1v1h-1zM1057 394h2v1h-2zM1104 394h1v1h-1zM1107 394h2v1h-2zM1142 394h1v1h-1zM1174 394h1v1h-1zM1177 394h2v1h-2zM1224 394h1v1h-1zM1232 394h7v1h-7zM1249 394h1v1h-1zM1274 394h1v1h-1zM1277 394h2v1h-2zM691 395h607v1h-607zM754 396h1v1h-1zM804 396h1v1h-1zM819 396h6v1h-6zM829 396h1v1h-1zM854 396h1v1h-1zM858 396h1v1h-1zM904 396h1v1h-1zM908 396h1v1h-1zM954 396h1v1h-1zM958 396h1v1h-1zM1004 396h1v1h-1zM1019 396h6v1h-6zM1029 396h1v1h-1zM1054 396h1v1h-1zM1058 396h1v1h-1zM1104 396h1v1h-1zM1108 396h1v1h-1zM1142 396h1v1h-1zM1174 396h1v1h-1zM1178 396h1v1h-1zM1224 396h1v1h-1zM1239 396h6v1h-6zM1249 396h1v1h-1zM1274 396h1v1h-1zM1278 396h1v1h-1zM754 397h1v1h-1zM804 397h1v1h-1zM822 397h6v1h-6zM829 397h1v1h-1zM854 397h1v1h-1zM904 397h1v1h-1zM954 397h1v1h-1zM1004 397h1v1h-1zM1022 397h6v1h-6zM1029 397h1v1h-1zM1054 397h1v1h-1zM1104 397h1v1h-1zM1142 397h1v1h-1zM1174 397h1v1h-1zM1224 397h1v1h-1zM1242 397h6v1h-6zM1249 397h1v1h-1zM1274 397h1v1h-1zM754 398h1v1h-1zM804 398h1v1h-1zM825 398h5v1h-5zM854 398h1v1h-1zM904 398h1v1h-1zM954 398h1v1h-1zM1004 398h1v1h-1zM1025 398h5v1h-5zM1054 398h1v1h-1zM1104 398h1v1h-1zM1142 398h1v1h-1zM1174 398h1v1h-1zM1224 398h1v1h-1zM1245 398h5v1h-5zM1274 398h1v1h-1zM754 399h1v1h-1zM804 399h1v1h-1zM828 399h2v1h-2zM854 399h1v1h-1zM904 399h1v1h-1zM954 399h1v1h-1zM1004 399h1v1h-1zM1028 399h2v1h-2zM1054 399h1v1h-1zM1104 399h1v1h-1zM1142 399h1v1h-1zM1174 399h1v1h-1zM1224 399h1v1h-1zM1248 399h2v1h-2zM1274 399h1v1h-1zM754 400h1v1h-1zM804 400h1v1h-1zM829 400h1v1h-1zM854 400h1v1h-1zM904 400h1v1h-1zM954 400h1v1h-1zM1004 400h1v1h-1zM1029 400h1v1h-1zM1054 400h1v1h-1zM1104 400h1v1h-1zM1142 400h1v1h-1zM1174 400h1v1h-1zM1224 400h1v1h-1zM1249 400h1v1h-1zM1274 400h1v1h-1zM754 401h1v1h-1zM804 401h1v1h-1zM829 401h1v1h-1zM854 401h1v1h-1zM904 401h1v1h-1zM954 401h1v1h-1zM1004 401h1v1h-1zM1029 401h1v1h-1zM1054 401h1v1h-1zM1104 401h1v1h-1zM1142 401h1v1h-1zM1174 401h1v1h-1zM1224 401h1v1h-1zM1249 401h1v1h-1zM1274 401h1v1h-1zM754 402h1v1h-1zM804 402h1v1h-1zM829 402h1v1h-1zM854 402h1v1h-1zM904 402h1v1h-1zM954 402h1v1h-1zM1004 402h1v1h-1zM1029 402h1v1h-1zM1054 402h1v1h-1zM1104 402h1v1h-1zM1142 402h1v1h-1zM1174 402h1v1h-1zM1224 402h1v1h-1zM1249 402h1v1h-1zM1274 402h1v1h-1zM691 403h607v1h-607zM739 404h1v1h-1zM742 404h1v1h-1zM747 404h5v1h-5zM754 404h1v1h-1zM797 404h5v1h-5zM804 404h1v1h-1zM829 404h1v1h-1zM847 404h5v1h-5zM854 404h1v1h-1zM897 404h5v1h-5zM904 404h1v1h-1zM947 404h5v1h-5zM954 404h1v1h-1zM997 404h5v1h-5zM1004 404h1v1h-1zM1029 404h1v1h-1zM1047 404h5v1h-5zM1054 404h1v1h-1zM1097 404h5v1h-5zM1104 404h1v1h-1zM1159 404h1v1h-1zM1162 404h1v1h-1zM1167 404h5v1h-5zM1174 404h1v1h-1zM1217 404h5v1h-5zM1224 404h1v1h-1zM1249 404h1v1h-1zM1267 404h5v1h-5zM1274 404h1v1h-1zM738 405h6v1h-6zM746 405h7v1h-7zM754 405h1v1h-1zM796 405h7v1h-7zM804 405h1v1h-1zM829 405h1v1h-1zM846 405h7v1h-7zM854 405h1v1h-1zM896 405h7v1h-7zM904 405h1v1h-1zM946 405h7v1h-7zM954 405h1v1h-1zM996 405h7v1h-7zM1004 405h1v1h-1zM1029 405h1v1h-1zM1046 405h7v1h-7zM1054 405h1v1h-1zM1096 405h7v1h-7zM1104 405h1v1h-1zM1158 405h6v1h-6zM1166 405h7v1h-7zM1174 405h1v1h-1zM1216 405h7v1h-7zM1224 405h1v1h-1zM1249 405h1v1h-1zM1266 405h7v1h-7zM1274 405h1v1h-1zM739 406h1v1h-1zM742 406h1v1h-1zM745 406h10v1h-10zM795 406h10v1h-10zM829 406h1v1h-1zM845 406h10v1h-10zM895 406h10v1h-10zM945 406h10v1h-10zM995 406h10v1h-10zM1029 406h1v1h-1zM1045 406h10v1h-10zM1095 406h10v1h-10zM1159 406h1v1h-1zM1162 406h1v1h-1zM1165 406h10v1h-10zM1215 406h10v1h-10zM1249 406h1v1h-1zM1265 406h10v1h-10zM739 407h1v1h-1zM742 407h1v1h-1zM745 407h10v1h-10zM795 407h10v1h-10zM829 407h1v1h-1zM845 407h10v1h-10zM895 407h10v1h-10zM945 407h10v1h-10zM995 407h10v1h-10zM1029 407h1v1h-1zM1045 407h10v1h-10zM1095 407h10v1h-10zM1159 407h1v1h-1zM1162 407h1v1h-1zM1165 407h10v1h-10zM1215 407h10v1h-10zM1249 407h1v1h-1zM1265 407h10v1h-10zM739 408h1v1h-1zM742 408h1v1h-1zM746 408h9v1h-9zM796 408h8v1h-8zM829 408h1v1h-1zM846 408h9v1h-9zM896 408h9v1h-9zM946 408h9v1h-9zM996 408h8v1h-8zM1029 408h1v1h-1zM1046 408h9v1h-9zM1096 408h9v1h-9zM1159 408h1v1h-1zM1162 408h1v1h-1zM1166 408h9v1h-9zM1216 408h8v1h-8zM1249 408h1v1h-1zM1266 408h9v1h-9zM738 409h6v1h-6zM746 409h7v1h-7zM754 409h1v1h-1zM796 409h7v1h-7zM829 409h1v1h-1zM846 409h7v1h-7zM854 409h1v1h-1zM889 409h1v1h-1zM896 409h7v1h-7zM904 409h1v1h-1zM946 409h7v1h-7zM954 409h1v1h-1zM996 409h7v1h-7zM1029 409h1v1h-1zM1046 409h7v1h-7zM1054 409h1v1h-1zM1096 409h7v1h-7zM1104 409h1v1h-1zM1158 409h6v1h-6zM1166 409h7v1h-7zM1174 409h1v1h-1zM1216 409h7v1h-7zM1249 409h1v1h-1zM1266 409h7v1h-7zM1274 409h1v1h-1zM739 410h1v1h-1zM742 410h1v1h-1zM747 410h5v1h-5zM754 410h1v1h-1zM797 410h5v1h-5zM829 410h1v1h-1zM847 410h5v1h-5zM854 410h1v1h-1zM889 410h1v1h-1zM897 410h5v1h-5zM904 410h1v1h-1zM947 410h5v1h-5zM954 410h1v1h-1zM997 410h5v1h-5zM1029 410h1v1h-1zM1047 410h5v1h-5zM1054 410h1v1h-1zM1097 410h5v1h-5zM1104 410h1v1h-1zM1159 410h1v1h-1zM1162 410h1v1h-1zM1167 410h5v1h-5zM1174 410h1v1h-1zM1217 410h5v1h-5zM1249 410h1v1h-1zM1267 410h5v1h-5zM1274 410h1v1h-1zM739 411h1v1h-1zM743 411h14v1h-14zM818 411h14v1h-14zM843 411h14v1h-14zM889 411h1v1h-1zM893 411h14v1h-14zM943 411h14v1h-14zM1018 411h14v1h-14zM1043 411h14v1h-14zM1093 411h14v1h-14zM1159 411h1v1h-1zM1163 411h14v1h-14zM1238 411h14v1h-14zM1263 411h14v1h-14zM754 412h1v1h-1zM829 412h1v1h-1zM854 412h1v1h-1zM889 412h1v1h-1zM891 412h1v1h-1zM897 412h5v1h-5zM904 412h1v1h-1zM954 412h1v1h-1zM1029 412h1v1h-1zM1054 412h1v1h-1zM1097 412h5v1h-5zM1104 412h1v1h-1zM1174 412h1v1h-1zM1249 412h1v1h-1zM1274 412h1v1h-1zM754 413h1v1h-1zM829 413h1v1h-1zM854 413h1v1h-1zM889 413h1v1h-1zM892 413h1v1h-1zM896 413h7v1h-7zM904 413h1v1h-1zM954 413h1v1h-1zM1029 413h1v1h-1zM1054 413h1v1h-1zM1096 413h7v1h-7zM1104 413h1v1h-1zM1174 413h1v1h-1zM1249 413h1v1h-1zM1274 413h1v1h-1zM754 414h1v1h-1zM829 414h1v1h-1zM854 414h1v1h-1zM889 414h1v1h-1zM892 414h1v1h-1zM895 414h10v1h-10zM954 414h1v1h-1zM1029 414h1v1h-1zM1054 414h1v1h-1zM1095 414h10v1h-10zM1174 414h1v1h-1zM1249 414h1v1h-1zM1274 414h1v1h-1zM754 415h1v1h-1zM829 415h1v1h-1zM854 415h1v1h-1zM889 415h1v1h-1zM892 415h1v1h-1zM895 415h10v1h-10zM954 415h1v1h-1zM1029 415h1v1h-1zM1054 415h1v1h-1zM1095 415h10v1h-10zM1174 415h1v1h-1zM1249 415h1v1h-1zM1274 415h1v1h-1zM754 416h1v1h-1zM829 416h1v1h-1zM854 416h1v1h-1zM889 416h1v1h-1zM891 416h1v1h-1zM896 416h8v1h-8zM954 416h1v1h-1zM1029 416h1v1h-1zM1054 416h1v1h-1zM1096 416h8v1h-8zM1174 416h1v1h-1zM1249 416h1v1h-1zM1274 416h1v1h-1zM754 417h1v1h-1zM829 417h1v1h-1zM854 417h1v1h-1zM889 417h1v1h-1zM891 417h1v1h-1zM896 417h7v1h-7zM954 417h1v1h-1zM1029 417h1v1h-1zM1054 417h1v1h-1zM1096 417h7v1h-7zM1174 417h1v1h-1zM1249 417h1v1h-1zM1274 417h1v1h-1zM754 418h1v1h-1zM829 418h1v1h-1zM854 418h1v1h-1zM889 418h2v1h-2zM897 418h5v1h-5zM954 418h1v1h-1zM1029 418h1v1h-1zM1054 418h1v1h-1zM1097 418h5v1h-5zM1174 418h1v1h-1zM1249 418h1v1h-1zM1274 418h1v1h-1zM743 419h14v1h-14zM818 419h14v1h-14zM843 419h14v1h-14zM943 419h14v1h-14zM1018 419h14v1h-14zM1043 419h14v1h-14zM1163 419h14v1h-14zM1238 419h14v1h-14zM1263 419h14v1h-14zM747 420h5v1h-5zM754 420h1v1h-1zM822 420h5v1h-5zM829 420h1v1h-1zM847 420h5v1h-5zM854 420h1v1h-1zM947 420h5v1h-5zM954 420h1v1h-1zM1022 420h5v1h-5zM1029 420h1v1h-1zM1047 420h5v1h-5zM1054 420h1v1h-1zM1167 420h5v1h-5zM1174 420h1v1h-1zM1242 420h5v1h-5zM1249 420h1v1h-1zM1267 420h5v1h-5zM1274 420h1v1h-1zM746 421h7v1h-7zM754 421h1v1h-1zM821 421h7v1h-7zM829 421h1v1h-1zM846 421h7v1h-7zM854 421h1v1h-1zM946 421h7v1h-7zM954 421h1v1h-1zM1021 421h7v1h-7zM1029 421h1v1h-1zM1046 421h7v1h-7zM1054 421h1v1h-1zM1166 421h7v1h-7zM1174 421h1v1h-1zM1241 421h7v1h-7zM1249 421h1v1h-1zM1266 421h7v1h-7zM1274 421h1v1h-1zM745 422h10v1h-10zM820 422h10v1h-10zM845 422h10v1h-10zM945 422h10v1h-10zM1020 422h10v1h-10zM1045 422h10v1h-10zM1165 422h10v1h-10zM1240 422h10v1h-10zM1265 422h10v1h-10zM745 423h10v1h-10zM820 423h10v1h-10zM845 423h10v1h-10zM945 423h10v1h-10zM1020 423h10v1h-10zM1045 423h10v1h-10zM1165 423h10v1h-10zM1240 423h10v1h-10zM1265 423h10v1h-10zM746 424h8v1h-8zM821 424h8v1h-8zM846 424h8v1h-8zM946 424h8v1h-8zM1021 424h8v1h-8zM1046 424h8v1h-8zM1166 424h8v1h-8zM1241 424h8v1h-8zM1266 424h8v1h-8zM746 425h7v1h-7zM821 425h7v1h-7zM846 425h7v1h-7zM946 425h7v1h-7zM1021 425h7v1h-7zM1046 425h7v1h-7zM1166 425h7v1h-7zM1241 425h7v1h-7zM1266 425h7v1h-7zM747 426h5v1h-5zM822 426h5v1h-5zM847 426h5v1h-5zM947 426h5v1h-5zM1022 426h5v1h-5zM1047 426h5v1h-5zM1167 426h5v1h-5zM1242 426h5v1h-5zM1267 426h5v1h-5zM954 476h76v1h-76zM754 477h1v1h-1zM804 477h1v1h-1zM954 477h76v1h-76zM754 478h2v1h-2zM804 478h2v1h-2zM954 478h1v1h-1zM979 478h1v1h-1zM1004 478h1v1h-1zM1029 478h1v1h-1zM754 479h2v1h-2zM804 479h2v1h-2zM954 479h1v1h-1zM979 479h1v1h-1zM1004 479h1v1h-1zM1029 479h1v1h-1zM754 480h3v1h-3zM804 480h3v1h-3zM854 480h76v1h-76zM954 480h1v1h-1zM979 480h1v1h-1zM1004 480h1v1h-1zM1029 480h1v1h-1zM1054 480h76v1h-76zM754 481h1v1h-1zM756 481h1v1h-1zM804 481h1v1h-1zM806 481h1v1h-1zM854 481h76v1h-76zM954 481h1v1h-1zM979 481h1v1h-1zM1004 481h1v1h-1zM1029 481h1v1h-1zM1054 481h76v1h-76zM754 482h1v1h-1zM756 482h2v1h-2zM804 482h1v1h-1zM806 482h2v1h-2zM854 482h1v1h-1zM879 482h1v1h-1zM904 482h1v1h-1zM929 482h1v1h-1zM954 482h76v1h-76zM1054 482h1v1h-1zM1079 482h1v1h-1zM1104 482h1v1h-1zM1129 482h1v1h-1zM754 483h1v1h-1zM757 483h1v1h-1zM804 483h1v1h-1zM807 483h1v1h-1zM854 483h1v1h-1zM879 483h1v1h-1zM904 483h1v1h-1zM929 483h1v1h-1zM954 483h76v1h-76zM1054 483h1v1h-1zM1079 483h1v1h-1zM1104 483h1v1h-1zM1129 483h1v1h-1zM754 484h2v1h-2zM757 484h2v1h-2zM804 484h2v1h-2zM807 484h2v1h-2zM854 484h1v1h-1zM879 484h1v1h-1zM904 484h1v1h-1zM929 484h1v1h-1zM954 484h1v1h-1zM979 484h1v1h-1zM1004 484h1v1h-1zM1029 484h1v1h-1zM1054 484h1v1h-1zM1079 484h1v1h-1zM1104 484h1v1h-1zM1129 484h1v1h-1zM754 485h2v1h-2zM758 485h1v1h-1zM804 485h2v1h-2zM808 485h1v1h-1zM854 485h1v1h-1zM879 485h1v1h-1zM904 485h1v1h-1zM929 485h1v1h-1zM954 485h1v1h-1zM979 485h1v1h-1zM1004 485h1v1h-1zM1029 485h1v1h-1zM1054 485h1v1h-1zM1079 485h1v1h-1zM1104 485h1v1h-1zM1129 485h1v1h-1zM754 486h3v1h-3zM758 486h1v1h-1zM804 486h3v1h-3zM808 486h1v1h-1zM854 486h76v1h-76zM954 486h1v1h-1zM979 486h1v1h-1zM1004 486h1v1h-1zM1029 486h1v1h-1zM1054 486h76v1h-76zM754 487h1v1h-1zM756 487h1v1h-1zM804 487h1v1h-1zM806 487h1v1h-1zM854 487h76v1h-76zM954 487h1v1h-1zM979 487h1v1h-1zM1004 487h1v1h-1zM1029 487h1v1h-1zM1054 487h76v1h-76zM754 488h1v1h-1zM756 488h2v1h-2zM804 488h1v1h-1zM806 488h2v1h-2zM854 488h1v1h-1zM879 488h1v1h-1zM904 488h1v1h-1zM929 488h1v1h-1zM954 488h1v1h-1zM979 488h1v1h-1zM1004 488h1v1h-1zM1029 488h1v1h-1zM1054 488h1v1h-1zM1079 488h1v1h-1zM1104 488h1v1h-1zM1129 488h1v1h-1zM754 489h1v1h-1zM757 489h1v1h-1zM804 489h1v1h-1zM807 489h1v1h-1zM854 489h1v1h-1zM879 489h1v1h-1zM904 489h1v1h-1zM929 489h1v1h-1zM954 489h1v1h-1zM979 489h1v1h-1zM1004 489h1v1h-1zM1029 489h1v1h-1zM1054 489h1v1h-1zM1079 489h1v1h-1zM1104 489h1v1h-1zM1129 489h1v1h-1zM754 490h1v1h-1zM757 490h2v1h-2zM804 490h1v1h-1zM807 490h2v1h-2zM854 490h1v1h-1zM879 490h1v1h-1zM904 490h1v1h-1zM929 490h1v1h-1zM954 490h1v1h-1zM979 490h1v1h-1zM1004 490h1v1h-1zM1029 490h1v1h-1zM1054 490h1v1h-1zM1079 490h1v1h-1zM1104 490h1v1h-1zM1129 490h1v1h-1zM691 491h607v1h-607zM754 492h1v1h-1zM758 492h1v1h-1zM804 492h1v1h-1zM808 492h1v1h-1zM854 492h1v1h-1zM879 492h1v1h-1zM904 492h1v1h-1zM929 492h1v1h-1zM954 492h1v1h-1zM979 492h1v1h-1zM1004 492h1v1h-1zM1029 492h1v1h-1zM1054 492h1v1h-1zM1079 492h1v1h-1zM1104 492h1v1h-1zM1129 492h1v1h-1zM1142 492h1v1h-1zM1174 492h76v1h-76zM754 493h1v1h-1zM804 493h1v1h-1zM854 493h1v1h-1zM879 493h1v1h-1zM904 493h1v1h-1zM929 493h1v1h-1zM954 493h1v1h-1zM979 493h1v1h-1zM1004 493h1v1h-1zM1029 493h1v1h-1zM1054 493h1v1h-1zM1079 493h1v1h-1zM1104 493h1v1h-1zM1129 493h1v1h-1zM1142 493h1v1h-1zM1174 493h76v1h-76zM754 494h1v1h-1zM804 494h1v1h-1zM854 494h1v1h-1zM879 494h1v1h-1zM904 494h1v1h-1zM929 494h1v1h-1zM954 494h1v1h-1zM979 494h1v1h-1zM1004 494h1v1h-1zM1029 494h1v1h-1zM1054 494h1v1h-1zM1079 494h1v1h-1zM1104 494h1v1h-1zM1129 494h1v1h-1zM1142 494h1v1h-1zM1174 494h1v1h-1zM1199 494h1v1h-1zM1224 494h1v1h-1zM1249 494h1v1h-1zM754 495h1v1h-1zM804 495h1v1h-1zM854 495h1v1h-1zM879 495h1v1h-1zM904 495h1v1h-1zM929 495h1v1h-1zM954 495h1v1h-1zM979 495h1v1h-1zM1004 495h1v1h-1zM1029 495h1v1h-1zM1054 495h1v1h-1zM1079 495h1v1h-1zM1104 495h1v1h-1zM1129 495h1v1h-1zM1142 495h1v1h-1zM1174 495h1v1h-1zM1199 495h1v1h-1zM1224 495h1v1h-1zM1249 495h1v1h-1zM754 496h1v1h-1zM804 496h1v1h-1zM854 496h1v1h-1zM879 496h1v1h-1zM904 496h1v1h-1zM929 496h1v1h-1zM954 496h1v1h-1zM979 496h1v1h-1zM997 496h5v1h-5zM1004 496h1v1h-1zM1029 496h1v1h-1zM1054 496h1v1h-1zM1079 496h1v1h-1zM1104 496h1v1h-1zM1129 496h1v1h-1zM1142 496h1v1h-1zM1174 496h1v1h-1zM1199 496h1v1h-1zM1224 496h1v1h-1zM1249 496h1v1h-1zM1274 496h1v1h-1zM754 497h1v1h-1zM804 497h1v1h-1zM854 497h1v1h-1zM879 497h1v1h-1zM904 497h1v1h-1zM929 497h1v1h-1zM954 497h1v1h-1zM979 497h1v1h-1zM996 497h7v1h-7zM1004 497h1v1h-1zM1029 497h1v1h-1zM1054 497h1v1h-1zM1079 497h1v1h-1zM1104 497h1v1h-1zM1129 497h1v1h-1zM1142 497h1v1h-1zM1174 497h1v1h-1zM1199 497h1v1h-1zM1224 497h1v1h-1zM1249 497h1v1h-1zM1274 497h1v1h-1zM754 498h1v1h-1zM804 498h1v1h-1zM854 498h1v1h-1zM879 498h1v1h-1zM904 498h1v1h-1zM929 498h1v1h-1zM954 498h1v1h-1zM979 498h1v1h-1zM995 498h10v1h-10zM1029 498h1v1h-1zM1054 498h1v1h-1zM1079 498h1v1h-1zM1104 498h1v1h-1zM1129 498h1v1h-1zM1142 498h1v1h-1zM1174 498h76v1h-76zM1274 498h1v1h-1zM691 499h607v1h-607zM747 500h5v1h-5zM754 500h1v1h-1zM797 500h5v1h-5zM804 500h1v1h-1zM847 500h5v1h-5zM854 500h1v1h-1zM879 500h1v1h-1zM904 500h1v1h-1zM929 500h1v1h-1zM947 500h5v1h-5zM954 500h1v1h-1zM979 500h1v1h-1zM996 500h8v1h-8zM1022 500h5v1h-5zM1029 500h1v1h-1zM1054 500h1v1h-1zM1079 500h1v1h-1zM1097 500h5v1h-5zM1104 500h1v1h-1zM1129 500h1v1h-1zM1142 500h1v1h-1zM1174 500h1v1h-1zM1199 500h1v1h-1zM1224 500h1v1h-1zM1249 500h1v1h-1zM1274 500h1v1h-1zM723 501h4v1h-4zM746 501h7v1h-7zM754 501h1v1h-1zM778 501h1v1h-1zM796 501h7v1h-7zM804 501h1v1h-1zM828 501h1v1h-1zM846 501h7v1h-7zM854 501h1v1h-1zM879 501h1v1h-1zM904 501h1v1h-1zM929 501h1v1h-1zM946 501h7v1h-7zM954 501h1v1h-1zM979 501h1v1h-1zM996 501h7v1h-7zM1021 501h7v1h-7zM1029 501h1v1h-1zM1054 501h1v1h-1zM1079 501h1v1h-1zM1096 501h7v1h-7zM1104 501h1v1h-1zM1129 501h1v1h-1zM1142 501h1v1h-1zM1174 501h1v1h-1zM1199 501h1v1h-1zM1224 501h1v1h-1zM1249 501h1v1h-1zM1274 501h1v1h-1zM722 502h2v1h-2zM726 502h2v1h-2zM745 502h10v1h-10zM772 502h2v1h-2zM778 502h1v1h-1zM795 502h10v1h-10zM822 502h2v1h-2zM828 502h1v1h-1zM845 502h10v1h-10zM879 502h1v1h-1zM904 502h1v1h-1zM929 502h1v1h-1zM945 502h10v1h-10zM979 502h1v1h-1zM997 502h5v1h-5zM1020 502h10v1h-10zM1054 502h1v1h-1zM1079 502h1v1h-1zM1095 502h10v1h-10zM1129 502h1v1h-1zM1142 502h1v1h-1zM1174 502h1v1h-1zM1199 502h1v1h-1zM1224 502h1v1h-1zM1249 502h1v1h-1zM1274 502h1v1h-1zM721 503h2v1h-2zM726 503h2v1h-2zM745 503h10v1h-10zM772 503h2v1h-2zM777 503h1v1h-1zM795 503h10v1h-10zM822 503h2v1h-2zM827 503h1v1h-1zM845 503h10v1h-10zM879 503h1v1h-1zM904 503h1v1h-1zM929 503h1v1h-1zM945 503h10v1h-10zM979 503h1v1h-1zM1020 503h10v1h-10zM1054 503h1v1h-1zM1079 503h1v1h-1zM1095 503h10v1h-10zM1129 503h1v1h-1zM1142 503h1v1h-1zM1174 503h1v1h-1zM1199 503h1v1h-1zM1224 503h1v1h-1zM1249 503h1v1h-1zM1274 503h1v1h-1zM721 504h2v1h-2zM726 504h2v1h-2zM746 504h9v1h-9zM773 504h5v1h-5zM796 504h9v1h-9zM823 504h5v1h-5zM846 504h9v1h-9zM879 504h1v1h-1zM904 504h1v1h-1zM929 504h1v1h-1zM946 504h8v1h-8zM979 504h1v1h-1zM1021 504h8v1h-8zM1054 504h1v1h-1zM1079 504h1v1h-1zM1096 504h9v1h-9zM1129 504h1v1h-1zM1142 504h1v1h-1zM1174 504h1v1h-1zM1199 504h1v1h-1zM1224 504h1v1h-1zM1249 504h1v1h-1zM1274 504h1v1h-1zM721 505h2v1h-2zM746 505h7v1h-7zM754 505h1v1h-1zM776 505h1v1h-1zM796 505h7v1h-7zM804 505h1v1h-1zM826 505h1v1h-1zM846 505h7v1h-7zM854 505h1v1h-1zM879 505h1v1h-1zM904 505h1v1h-1zM929 505h1v1h-1zM946 505h7v1h-7zM979 505h1v1h-1zM1021 505h7v1h-7zM1054 505h1v1h-1zM1079 505h1v1h-1zM1096 505h7v1h-7zM1104 505h1v1h-1zM1129 505h1v1h-1zM1142 505h1v1h-1zM1174 505h1v1h-1zM1199 505h1v1h-1zM1224 505h1v1h-1zM1249 505h1v1h-1zM1274 505h1v1h-1zM721 506h2v1h-2zM747 506h5v1h-5zM754 506h1v1h-1zM776 506h1v1h-1zM797 506h5v1h-5zM804 506h1v1h-1zM826 506h1v1h-1zM847 506h5v1h-5zM854 506h1v1h-1zM879 506h1v1h-1zM904 506h1v1h-1zM929 506h1v1h-1zM947 506h5v1h-5zM979 506h1v1h-1zM1022 506h5v1h-5zM1054 506h1v1h-1zM1079 506h1v1h-1zM1097 506h5v1h-5zM1104 506h1v1h-1zM1129 506h1v1h-1zM1142 506h1v1h-1zM1174 506h1v1h-1zM1199 506h1v1h-1zM1224 506h1v1h-1zM1249 506h1v1h-1zM1274 506h1v1h-1zM691 507h607v1h-607zM721 508h2v1h-2zM754 508h1v1h-1zM775 508h1v1h-1zM804 508h1v1h-1zM825 508h1v1h-1zM854 508h1v1h-1zM879 508h1v1h-1zM897 508h5v1h-5zM904 508h1v1h-1zM929 508h1v1h-1zM979 508h1v1h-1zM1047 508h5v1h-5zM1054 508h1v1h-1zM1079 508h1v1h-1zM1104 508h1v1h-1zM1122 508h5v1h-5zM1129 508h1v1h-1zM1142 508h1v1h-1zM1174 508h1v1h-1zM1199 508h1v1h-1zM1224 508h1v1h-1zM1249 508h1v1h-1zM1274 508h1v1h-1zM721 509h2v1h-2zM754 509h1v1h-1zM770 509h2v1h-2zM774 509h1v1h-1zM804 509h1v1h-1zM820 509h2v1h-2zM824 509h1v1h-1zM854 509h1v1h-1zM879 509h1v1h-1zM896 509h7v1h-7zM904 509h1v1h-1zM929 509h1v1h-1zM979 509h1v1h-1zM1046 509h7v1h-7zM1054 509h1v1h-1zM1079 509h1v1h-1zM1104 509h1v1h-1zM1121 509h7v1h-7zM1129 509h1v1h-1zM1142 509h1v1h-1zM1174 509h1v1h-1zM1199 509h1v1h-1zM1224 509h1v1h-1zM1249 509h1v1h-1zM1274 509h1v1h-1zM721 510h2v1h-2zM754 510h1v1h-1zM770 510h2v1h-2zM774 510h1v1h-1zM804 510h1v1h-1zM820 510h2v1h-2zM824 510h1v1h-1zM854 510h1v1h-1zM879 510h1v1h-1zM895 510h10v1h-10zM929 510h1v1h-1zM979 510h1v1h-1zM1045 510h10v1h-10zM1079 510h1v1h-1zM1104 510h1v1h-1zM1120 510h10v1h-10zM1142 510h1v1h-1zM1174 510h1v1h-1zM1199 510h1v1h-1zM1224 510h1v1h-1zM1249 510h1v1h-1zM1274 510h1v1h-1zM721 511h2v1h-2zM728 511h1v1h-1zM754 511h1v1h-1zM771 511h3v1h-3zM804 511h1v1h-1zM821 511h3v1h-3zM854 511h1v1h-1zM879 511h1v1h-1zM895 511h10v1h-10zM929 511h1v1h-1zM979 511h1v1h-1zM1045 511h10v1h-10zM1079 511h1v1h-1zM1104 511h1v1h-1zM1120 511h10v1h-10zM1142 511h1v1h-1zM1174 511h1v1h-1zM1199 511h1v1h-1zM1224 511h1v1h-1zM1249 511h1v1h-1zM1274 511h1v1h-1zM722 512h2v1h-2zM726 512h2v1h-2zM754 512h1v1h-1zM773 512h1v1h-1zM804 512h1v1h-1zM823 512h1v1h-1zM854 512h1v1h-1zM872 512h5v1h-5zM879 512h1v1h-1zM896 512h8v1h-8zM929 512h1v1h-1zM979 512h1v1h-1zM1046 512h8v1h-8zM1079 512h1v1h-1zM1097 512h5v1h-5zM1104 512h1v1h-1zM1121 512h8v1h-8zM1142 512h1v1h-1zM1167 512h5v1h-5zM1174 512h1v1h-1zM1199 512h1v1h-1zM1224 512h1v1h-1zM1249 512h1v1h-1zM1274 512h1v1h-1zM723 513h4v1h-4zM754 513h1v1h-1zM772 513h1v1h-1zM804 513h1v1h-1zM822 513h1v1h-1zM854 513h1v1h-1zM871 513h7v1h-7zM879 513h1v1h-1zM896 513h7v1h-7zM929 513h1v1h-1zM979 513h1v1h-1zM1046 513h7v1h-7zM1079 513h1v1h-1zM1096 513h7v1h-7zM1104 513h1v1h-1zM1121 513h7v1h-7zM1142 513h1v1h-1zM1166 513h7v1h-7zM1174 513h1v1h-1zM1199 513h1v1h-1zM1224 513h1v1h-1zM1249 513h1v1h-1zM1274 513h1v1h-1zM754 514h1v1h-1zM804 514h1v1h-1zM854 514h1v1h-1zM870 514h10v1h-10zM897 514h5v1h-5zM929 514h1v1h-1zM979 514h1v1h-1zM1047 514h5v1h-5zM1079 514h1v1h-1zM1095 514h10v1h-10zM1122 514h5v1h-5zM1142 514h1v1h-1zM1165 514h10v1h-10zM1199 514h1v1h-1zM1224 514h1v1h-1zM1249 514h1v1h-1zM1274 514h1v1h-1zM691 515h607v1h-607zM747 516h5v1h-5zM754 516h1v1h-1zM797 516h5v1h-5zM804 516h1v1h-1zM847 516h5v1h-5zM854 516h1v1h-1zM871 516h8v1h-8zM922 516h5v1h-5zM929 516h1v1h-1zM972 516h5v1h-5zM979 516h1v1h-1zM1072 516h5v1h-5zM1079 516h1v1h-1zM1096 516h8v1h-8zM1142 516h1v1h-1zM1166 516h8v1h-8zM1192 516h5v1h-5zM1199 516h1v1h-1zM1224 516h1v1h-1zM1249 516h1v1h-1zM1267 516h5v1h-5zM1274 516h1v1h-1zM746 517h7v1h-7zM754 517h1v1h-1zM796 517h7v1h-7zM804 517h1v1h-1zM846 517h7v1h-7zM854 517h1v1h-1zM871 517h7v1h-7zM921 517h7v1h-7zM929 517h1v1h-1zM971 517h7v1h-7zM979 517h1v1h-1zM1071 517h7v1h-7zM1079 517h1v1h-1zM1096 517h7v1h-7zM1142 517h1v1h-1zM1166 517h7v1h-7zM1191 517h7v1h-7zM1199 517h1v1h-1zM1224 517h1v1h-1zM1249 517h1v1h-1zM1266 517h7v1h-7zM1274 517h1v1h-1zM745 518h10v1h-10zM795 518h10v1h-10zM845 518h10v1h-10zM872 518h5v1h-5zM920 518h10v1h-10zM970 518h10v1h-10zM1070 518h10v1h-10zM1097 518h5v1h-5zM1142 518h1v1h-1zM1167 518h5v1h-5zM1190 518h10v1h-10zM1224 518h1v1h-1zM1249 518h1v1h-1zM1265 518h10v1h-10zM745 519h10v1h-10zM795 519h10v1h-10zM845 519h10v1h-10zM920 519h10v1h-10zM970 519h10v1h-10zM1070 519h10v1h-10zM1142 519h1v1h-1zM1190 519h10v1h-10zM1224 519h1v1h-1zM1249 519h1v1h-1zM1265 519h10v1h-10zM746 520h8v1h-8zM796 520h8v1h-8zM846 520h8v1h-8zM921 520h8v1h-8zM971 520h8v1h-8zM1071 520h8v1h-8zM1142 520h1v1h-1zM1191 520h8v1h-8zM1224 520h1v1h-1zM1249 520h1v1h-1zM1266 520h8v1h-8zM746 521h7v1h-7zM796 521h7v1h-7zM846 521h7v1h-7zM921 521h7v1h-7zM971 521h7v1h-7zM1071 521h7v1h-7zM1142 521h1v1h-1zM1191 521h7v1h-7zM1224 521h1v1h-1zM1249 521h1v1h-1zM1266 521h7v1h-7zM747 522h5v1h-5zM797 522h5v1h-5zM847 522h5v1h-5zM922 522h5v1h-5zM972 522h5v1h-5zM1072 522h5v1h-5zM1142 522h1v1h-1zM1192 522h5v1h-5zM1224 522h1v1h-1zM1249 522h1v1h-1zM1267 522h5v1h-5zM691 523h607v1h-607zM1217 524h5v1h-5zM1224 524h1v1h-1zM1249 524h1v1h-1zM1216 525h7v1h-7zM1224 525h1v1h-1zM1249 525h1v1h-1zM1215 526h10v1h-10zM1249 526h1v1h-1zM1215 527h10v1h-10zM1249 527h1v1h-1zM1216 528h8v1h-8zM1242 528h5v1h-5zM1249 528h1v1h-1zM1292 528h5v1h-5zM1216 529h7v1h-7zM1241 529h7v1h-7zM1249 529h1v1h-1zM1291 529h7v1h-7zM1217 530h5v1h-5zM1240 530h10v1h-10zM1290 530h8v1h-8zM1238 531h14v1h-14zM1288 531h10v1h-10zM1241 532h8v1h-8zM1291 532h7v1h-7zM1241 533h7v1h-7zM1291 533h7v1h-7zM1242 534h5v1h-5zM1292 534h5v1h-5zM691 611h607v1h-607zM1142 612h1v1h-1zM1142 613h1v1h-1zM1142 614h1v1h-1zM1142 615h1v1h-1zM1142 616h1v1h-1zM1142 617h1v1h-1zM1142 618h1v1h-1zM691 619h607v1h-607zM1142 620h1v1h-1zM723 621h4v1h-4zM1142 621h1v1h-1zM722 622h2v1h-2zM726 622h2v1h-2zM1142 622h1v1h-1zM721 623h2v1h-2zM726 623h2v1h-2zM1142 623h1v1h-1zM721 624h2v1h-2zM726 624h2v1h-2zM1142 624h1v1h-1zM721 625h2v1h-2zM1142 625h1v1h-1zM721 626h2v1h-2zM1142 626h1v1h-1zM691 627h607v1h-607zM721 628h2v1h-2zM745 628h9v1h-9zM1142 628h1v1h-1zM1165 628h9v1h-9zM721 629h2v1h-2zM745 629h9v1h-9zM1142 629h1v1h-1zM1165 629h9v1h-9zM721 630h2v1h-2zM745 630h9v1h-9zM1142 630h1v1h-1zM1165 630h9v1h-9zM721 631h2v1h-2zM728 631h1v1h-1zM1142 631h1v1h-1zM722 632h2v1h-2zM726 632h2v1h-2zM1142 632h1v1h-1zM723 633h4v1h-4zM1142 633h1v1h-1zM1142 634h1v1h-1zM691 635h607v1h-607zM1142 636h1v1h-1zM1142 637h1v1h-1zM1142 638h1v1h-1zM1142 639h1v1h-1zM1142 640h1v1h-1zM1142 641h1v1h-1zM1142 642h1v1h-1zM691 643h607v1h-607z"/><g fill="#000"><g transform="translate(0,0)" fill="none" stroke="#000"><path d="M704,156 C700.5,156 700,151 704,149.5 C709,148.5 713,151.5 712.5,155.5 C712,160 707,162 703,161.8 C697.5,161.5 694.5,158 694.5,153" stroke-width="1.5"/><path d="M694.5,153.5 C694.5,147 700,142 704,138 C707,135 709,131 708.5,126" stroke-width="2.9"/><path d="M708.5,126.5 C708.2,123 706.5,121 705.5,121 C703,121.5 701.5,126 701.8,131 C702,134 703,137 704,140" stroke-width="2"/><path d="M704,140 C705.5,146 707,155 707.8,171 C708,175.5 703,176.5 700.5,173" stroke-width="1.4"/><circle cx="701.2" cy="171" r="3.3" fill="#000" stroke="none"/></g><g transform="translate(0,360)" fill="none" stroke="#000"><path d="M704,156 C700.5,156 700,151 704,149.5 C709,148.5 713,151.5 712.5,155.5 C712,160 707,162 703,161.8 C697.5,161.5 694.5,158 694.5,153" stroke-width="1.5"/><path d="M694.5,153.5 C694.5,147 700,142 704,138 C707,135 709,131 708.5,126" stroke-width="2.9"/><path d="M708.5,126.5 C708.2,123 706.5,121 705.5,121 C703,121.5 701.5,126 701.8,131 C702,134 703,137 704,140" stroke-width="2"/><path d="M704,140 C705.5,146 707,155 707.8,171 C708,175.5 703,176.5 700.5,173" stroke-width="1.4"/><circle cx="701.2" cy="171" r="3.3" fill="#000" stroke="none"/></g><g transform="translate(0,480)" fill="none" stroke="#000"><path d="M704,156 C700.5,156 700,151 704,149.5 C709,148.5 713,151.5 712.5,155.5 C712,160 707,162 703,161.8 C697.5,161.5 694.5,158 694.5,153" stroke-width="1.5"/><path d="M694.5,153.5 C694.5,147 700,142 704,138 C707,135 709,131 708.5,126" stroke-width="2.9"/><path d="M708.5,126.5 C708.2,123 706.5,121 705.5,121 C703,121.5 701.5,126 701.8,131 C702,134 703,137 704,140" stroke-width="2"/><path d="M704,140 C705.5,146 707,155 707.8,171 C708,175.5 703,176.5 700.5,173" stroke-width="1.4"/><circle cx="701.2" cy="171" r="3.3" fill="#000" stroke="none"/></g><g transform="translate(0,0)"><circle cx="696.5" cy="258.8" r="3.4"/><path d="M694,257 C696,251 707,249.5 708,259 C708.5,267 701,273 692,277" fill="none" stroke="#000" stroke-width="1.5"/><path d="M705.5,254 C708,258 707.5,266 699,272.5" fill="none" stroke="#000" stroke-width="2.8"/><circle cx="712.8" cy="255.6" r="1.8"/><circle cx="712.8" cy="262.5" r="1.8"/></g><g transform="translate(0,120)"><circle cx="696.5" cy="258.8" r="3.4"/><path d="M694,257 C696,251 707,249.5 708,259 C708.5,267 701,273 692,277" fill="none" stroke="#000" stroke-width="1.5"/><path d="M705.5,254 C708,258 707.5,266 699,272.5" fill="none" stroke="#000" stroke-width="2.8"/><circle cx="712.8" cy="255.6" r="1.8"/><circle cx="712.8" cy="262.5" r="1.8"/></g></g></svg>
<div style="left:681px;top:42px;width:630px;height:30px;background:#eeeeee;"></div>
<div style="left:1298px;top:78px;width:13px;height:609px;background:linear-gradient(90deg,#c2c2c2,#e0e0e0);"></div>
<div class="vcap" style="left:1298px;top:78px;width:11px;height:14px"></div>
<div class="vcap" style="left:1298px;top:673px;width:11px;height:14px"></div>
<div class="vknob" style="left:1298px;top:105px;width:11px;height:22px"><i></i></div>
<div style="left:691px;top:694px;width:601px;height:13px;background:linear-gradient(#c2c2c2,#e0e0e0);"></div>
<div class="cap" style="left:691px;top:694px;width:14px;height:11px"></div>
<div class="cap" style="left:1278px;top:694px;width:14px;height:11px"></div>
<div class="knob" style="left:705px;top:694px;width:22px;height:11px"><i></i></div>
<svg style="position:absolute;left:0;top:0" width="1322" height="764"><path shape-rendering="crispEdges" fill="#000" d="M197 90h2v1h-2zM197 91h1v1h-1zM199 91h4v1h-4zM196 92h1v1h-1zM203 92h4v1h-4zM196 93h1v1h-1zM207 93h4v1h-4zM196 94h1v1h-1zM211 94h4v1h-4zM196 95h1v1h-1zM215 95h4v1h-4zM195 96h1v1h-1zM219 96h4v1h-4zM195 97h1v1h-1zM223 97h4v1h-4zM195 98h1v1h-1zM227 98h4v1h-4zM195 99h1v1h-1zM231 99h4v1h-4zM194 100h1v1h-1zM235 100h44v1h-44zM194 101h1v1h-1zM279 101h2v1h-2zM194 102h1v1h-1zM281 102h1v1h-1zM193 103h1v1h-1zM282 103h2v1h-2zM193 104h1v1h-1zM284 104h1v1h-1zM340 104h5v1h-5zM193 105h1v1h-1zM285 105h2v1h-2zM339 105h1v1h-1zM345 105h1v1h-1zM193 106h1v1h-1zM287 106h1v1h-1zM338 106h1v1h-1zM346 106h1v1h-1zM192 107h1v1h-1zM288 107h2v1h-2zM337 107h1v1h-1zM347 107h1v1h-1zM192 108h1v1h-1zM290 108h1v1h-1zM336 108h1v1h-1zM348 108h1v1h-1zM192 109h1v1h-1zM291 109h2v1h-2zM336 109h1v1h-1zM349 109h1v1h-1zM381 109h3v1h-3zM192 110h1v1h-1zM293 110h1v1h-1zM335 110h1v1h-1zM350 110h1v1h-1zM378 110h3v1h-3zM384 110h2v1h-2zM191 111h1v1h-1zM294 111h1v1h-1zM334 111h1v1h-1zM351 111h1v1h-1zM377 111h1v1h-1zM386 111h1v1h-1zM191 112h1v1h-1zM295 112h2v1h-2zM334 112h1v1h-1zM351 112h1v1h-1zM376 112h1v1h-1zM387 112h1v1h-1zM191 113h1v1h-1zM297 113h1v1h-1zM334 113h1v1h-1zM352 113h1v1h-1zM374 113h2v1h-2zM388 113h1v1h-1zM190 114h1v1h-1zM298 114h2v1h-2zM333 114h1v1h-1zM353 114h1v1h-1zM373 114h1v1h-1zM389 114h1v1h-1zM190 115h1v1h-1zM300 115h1v1h-1zM333 115h1v1h-1zM354 115h1v1h-1zM372 115h1v1h-1zM389 115h1v1h-1zM190 116h1v1h-1zM301 116h2v1h-2zM332 116h1v1h-1zM355 116h1v1h-1zM371 116h1v1h-1zM390 116h1v1h-1zM190 117h1v1h-1zM303 117h1v1h-1zM332 117h1v1h-1zM356 117h1v1h-1zM370 117h1v1h-1zM391 117h1v1h-1zM189 118h1v1h-1zM304 118h2v1h-2zM332 118h1v1h-1zM357 118h1v1h-1zM369 118h1v1h-1zM391 118h1v1h-1zM189 119h1v1h-1zM306 119h1v1h-1zM331 119h1v1h-1zM358 119h2v1h-2zM367 119h2v1h-2zM392 119h1v1h-1zM189 120h1v1h-1zM307 120h2v1h-2zM331 120h1v1h-1zM360 120h7v1h-7zM392 120h1v1h-1zM189 121h1v1h-1zM309 121h1v1h-1zM331 121h1v1h-1zM393 121h1v1h-1zM188 122h1v1h-1zM310 122h2v1h-2zM330 122h1v1h-1zM393 122h1v1h-1zM188 123h1v1h-1zM312 123h1v1h-1zM330 123h1v1h-1zM394 123h1v1h-1zM330 124h1v1h-1zM394 124h1v1h-1zM329 125h1v1h-1zM395 125h1v1h-1zM329 126h1v1h-1zM395 126h1v1h-1zM329 127h1v1h-1zM396 127h1v1h-1zM329 128h1v1h-1zM396 128h1v1h-1zM328 129h1v1h-1zM397 129h1v1h-1zM328 130h1v1h-1zM397 130h1v1h-1zM328 131h1v1h-1zM398 131h1v1h-1zM328 132h1v1h-1zM398 132h1v1h-1zM327 133h1v1h-1zM399 133h1v1h-1zM327 134h1v1h-1zM399 134h1v1h-1zM327 135h1v1h-1zM399 135h1v1h-1zM327 136h1v1h-1zM400 136h1v1h-1zM326 137h1v1h-1zM400 137h1v1h-1zM326 138h1v1h-1zM401 138h1v1h-1zM326 139h1v1h-1zM401 139h1v1h-1zM326 140h1v1h-1zM402 140h1v1h-1zM325 141h1v1h-1zM402 141h1v1h-1zM325 142h1v1h-1zM403 142h1v1h-1zM433 142h5v1h-5zM325 143h1v1h-1zM403 143h1v1h-1zM431 143h2v1h-2zM438 143h2v1h-2zM325 144h1v1h-1zM404 144h1v1h-1zM430 144h1v1h-1zM440 144h1v1h-1zM324 145h1v1h-1zM404 145h1v1h-1zM428 145h2v1h-2zM441 145h1v1h-1zM324 146h1v1h-1zM405 146h1v1h-1zM427 146h1v1h-1zM442 146h1v1h-1zM324 147h1v1h-1zM406 147h1v1h-1zM426 147h1v1h-1zM443 147h1v1h-1zM324 148h1v1h-1zM406 148h1v1h-1zM425 148h1v1h-1zM443 148h1v1h-1zM324 149h1v1h-1zM407 149h1v1h-1zM424 149h1v1h-1zM444 149h1v1h-1zM323 150h1v1h-1zM408 150h1v1h-1zM423 150h1v1h-1zM445 150h1v1h-1zM323 151h1v1h-1zM409 151h1v1h-1zM422 151h1v1h-1zM446 151h1v1h-1zM323 152h1v1h-1zM410 152h1v1h-1zM420 152h2v1h-2zM446 152h1v1h-1zM323 153h1v1h-1zM411 153h1v1h-1zM419 153h1v1h-1zM447 153h1v1h-1zM322 154h1v1h-1zM412 154h7v1h-7zM447 154h1v1h-1zM322 155h1v1h-1zM448 155h1v1h-1zM322 156h1v1h-1zM449 156h1v1h-1zM322 157h1v1h-1zM449 157h1v1h-1zM322 158h257v1h-257zM450 159h1v1h-1zM577 159h1v1h-1zM451 160h1v1h-1zM577 160h1v1h-1zM452 161h1v1h-1zM577 161h1v1h-1zM452 162h1v1h-1zM482 162h7v1h-7zM577 162h1v1h-1zM453 163h1v1h-1zM481 163h1v1h-1zM489 163h1v1h-1zM577 163h1v1h-1zM453 164h1v1h-1zM479 164h2v1h-2zM490 164h1v1h-1zM576 164h1v1h-1zM454 165h1v1h-1zM478 165h1v1h-1zM491 165h1v1h-1zM576 165h1v1h-1zM455 166h1v1h-1zM477 166h1v1h-1zM492 166h1v1h-1zM576 166h1v1h-1zM456 167h1v1h-1zM476 167h1v1h-1zM493 167h1v1h-1zM576 167h1v1h-1zM456 168h1v1h-1zM475 168h1v1h-1zM493 168h1v1h-1zM575 168h1v1h-1zM457 169h1v1h-1zM474 169h1v1h-1zM494 169h1v1h-1zM575 169h1v1h-1zM458 170h1v1h-1zM473 170h1v1h-1zM495 170h1v1h-1zM575 170h1v1h-1zM459 171h1v1h-1zM471 171h2v1h-2zM495 171h1v1h-1zM575 171h1v1h-1zM460 172h1v1h-1zM470 172h1v1h-1zM496 172h1v1h-1zM575 172h1v1h-1zM461 173h2v1h-2zM468 173h2v1h-2zM496 173h1v1h-1zM574 173h1v1h-1zM463 174h5v1h-5zM497 174h1v1h-1zM574 174h1v1h-1zM497 175h1v1h-1zM574 175h1v1h-1zM498 176h1v1h-1zM574 176h1v1h-1zM498 177h1v1h-1zM573 177h1v1h-1zM499 178h1v1h-1zM573 178h1v1h-1zM499 179h1v1h-1zM573 179h1v1h-1zM500 180h1v1h-1zM573 180h1v1h-1zM500 181h1v1h-1zM572 181h1v1h-1zM500 182h1v1h-1zM572 182h1v1h-1zM501 183h1v1h-1zM572 183h1v1h-1zM501 184h1v1h-1zM572 184h1v1h-1zM502 185h1v1h-1zM571 185h1v1h-1zM502 186h1v1h-1zM571 186h1v1h-1zM503 187h1v1h-1zM571 187h1v1h-1zM503 188h1v1h-1zM571 188h1v1h-1zM504 189h1v1h-1zM570 189h1v1h-1zM504 190h1v1h-1zM570 190h1v1h-1zM505 191h1v1h-1zM570 191h1v1h-1zM505 192h1v1h-1zM570 192h1v1h-1zM506 193h1v1h-1zM569 193h1v1h-1zM506 194h1v1h-1zM569 194h1v1h-1zM507 195h1v1h-1zM569 195h1v1h-1zM507 196h1v1h-1zM534 196h7v1h-7zM568 196h1v1h-1zM508 197h1v1h-1zM532 197h2v1h-2zM541 197h2v1h-2zM568 197h1v1h-1zM508 198h1v1h-1zM531 198h1v1h-1zM543 198h1v1h-1zM568 198h1v1h-1zM509 199h1v1h-1zM530 199h1v1h-1zM544 199h1v1h-1zM567 199h1v1h-1zM510 200h1v1h-1zM529 200h1v1h-1zM545 200h1v1h-1zM567 200h1v1h-1zM510 201h1v1h-1zM528 201h1v1h-1zM546 201h1v1h-1zM567 201h1v1h-1zM511 202h1v1h-1zM527 202h1v1h-1zM547 202h1v1h-1zM566 202h1v1h-1zM512 203h1v1h-1zM525 203h2v1h-2zM548 203h1v1h-1zM566 203h1v1h-1zM513 204h1v1h-1zM524 204h1v1h-1zM548 204h1v1h-1zM565 204h1v1h-1zM514 205h1v1h-1zM523 205h1v1h-1zM549 205h1v1h-1zM565 205h1v1h-1zM515 206h2v1h-2zM520 206h3v1h-3zM550 206h1v1h-1zM565 206h1v1h-1zM517 207h3v1h-3zM551 207h1v1h-1zM564 207h1v1h-1zM552 208h1v1h-1zM563 208h1v1h-1zM553 209h1v1h-1zM563 209h1v1h-1zM554 210h1v1h-1zM562 210h1v1h-1zM555 211h1v1h-1zM561 211h1v1h-1zM556 212h5v1h-5z"/></svg>
<svg style="position:absolute;left:0;top:0" width="1322" height="764" shape-rendering="crispEdges"><defs><path id="g65" d="M1 0h3v1h-3zM0 1h1v1h-1zM4 1h1v1h-1zM0 2h1v1h-1zM4 2h1v1h-1zM0 3h1v1h-1zM4 3h1v1h-1zM0 4h5v1h-5zM0 5h1v1h-1zM4 5h1v1h-1zM0 6h1v1h-1zM4 6h1v1h-1zM0 7h1v1h-1zM4 7h1v1h-1z"/><path id="g67" d="M1 0h3v1h-3zM0 1h1v1h-1zM4 1h1v1h-1zM0 2h1v1h-1zM0 3h1v1h-1zM0 4h1v1h-1zM0 5h1v1h-1zM0 6h1v1h-1zM4 6h1v1h-1zM1 7h3v1h-3z"/><path id="g68" d="M0 0h4v1h-4zM0 1h1v1h-1zM4 1h1v1h-1zM0 2h1v1h-1zM4 2h1v1h-1zM0 3h1v1h-1zM4 3h1v1h-1zM0 4h1v1h-1zM4 4h1v1h-1zM0 5h1v1h-1zM4 5h1v1h-1zM0 6h1v1h-1zM4 6h1v1h-1zM0 7h4v1h-4z"/><path id="g69" d="M0 0h5v1h-5zM0 1h1v1h-1zM0 2h1v1h-1zM0 3h4v1h-4zM0 4h1v1h-1zM0 5h1v1h-1zM0 6h1v1h-1zM0 7h5v1h-5z"/><path id="g70" d="M0 0h5v1h-5zM0 1h1v1h-1zM0 2h1v1h-1zM0 3h4v1h-4zM0 4h1v1h-1zM0 5h1v1h-1zM0 6h1v1h-1zM0 7h1v1h-1z"/><path id="g72" d="M0 0h1v1h-1zM4 0h1v1h-1zM0 1h1v1h-1zM4 1h1v1h-1zM0 2h1v1h-1zM4 2h1v1h-1zM0 3h5v1h-5zM0 4h1v1h-1zM4 4h1v1h-1zM0 5h1v1h-1zM4 5h1v1h-1zM0 6h1v1h-1zM4 6h1v1h-1zM0 7h1v1h-1zM4 7h1v1h-1z"/><path id="g73" d="M1 0h3v1h-3zM2 1h1v1h-1zM2 2h1v1h-1zM2 3h1v1h-1zM2 4h1v1h-1zM2 5h1v1h-1zM2 6h1v1h-1zM1 7h3v1h-3z"/><path id="g75" d="M0 0h1v1h-1zM4 0h1v1h-1zM0 1h1v1h-1zM3 1h1v1h-1zM0 2h1v1h-1zM2 2h1v1h-1zM0 3h2v1h-2zM0 4h2v1h-2zM0 5h1v1h-1zM2 5h1v1h-1zM0 6h1v1h-1zM3 6h1v1h-1zM0 7h1v1h-1zM4 7h1v1h-1z"/><path id="g76" d="M0 0h1v1h-1zM0 1h1v1h-1zM0 2h1v1h-1zM0 3h1v1h-1zM0 4h1v1h-1zM0 5h1v1h-1zM0 6h1v1h-1zM0 7h5v1h-5z"/><path id="g77" d="M0 0h1v1h-1zM4 0h1v1h-1zM0 1h2v1h-2zM3 1h2v1h-2zM0 2h1v1h-1zM2 2h1v1h-1zM4 2h1v1h-1zM0 3h1v1h-1zM4 3h1v1h-1zM0 4h1v1h-1zM4 4h1v1h-1zM0 5h1v1h-1zM4 5h1v1h-1zM0 6h1v1h-1zM4 6h1v1h-1zM0 7h1v1h-1zM4 7h1v1h-1z"/><path id="g78" d="M0 0h1v1h-1zM4 0h1v1h-1zM0 1h2v1h-2zM4 1h1v1h-1zM0 2h1v1h-1zM2 2h1v1h-1zM4 2h1v1h-1zM0 3h1v1h-1zM3 3h2v1h-2zM0 4h1v1h-1zM4 4h1v1h-1zM0 5h1v1h-1zM4 5h1v1h-1zM0 6h1v1h-1zM4 6h1v1h-1zM0 7h1v1h-1zM4 7h1v1h-1z"/><path id="g79" d="M1 0h3v1h-3zM0 1h1v1h-1zM4 1h1v1h-1zM0 2h1v1h-1zM4 2h1v1h-1zM0 3h1v1h-1zM4 3h1v1h-1zM0 4h1v1h-1zM4 4h1v1h-1zM0 5h1v1h-1zM4 5h1v1h-1zM0 6h1v1h-1zM4 6h1v1h-1zM1 7h3v1h-3z"/><path id="g80" d="M0 0h4v1h-4zM0 1h1v1h-1zM4 1h1v1h-1zM0 2h1v1h-1zM4 2h1v1h-1zM0 3h1v1h-1zM4 3h1v1h-1zM0 4h4v1h-4zM0 5h1v1h-1zM0 6h1v1h-1zM0 7h1v1h-1z"/><path id="g81" d="M1 0h3v1h-3zM0 1h1v1h-1zM4 1h1v1h-1zM0 2h1v1h-1zM4 2h1v1h-1zM0 3h1v1h-1zM4 3h1v1h-1zM0 4h1v1h-1zM2 4h1v1h-1zM4 4h1v1h-1zM0 5h1v1h-1zM2 5h1v1h-1zM4 5h1v1h-1zM0 6h1v1h-1zM3 6h2v1h-2zM1 7h3v1h-3z"/><path id="g82" d="M0 0h4v1h-4zM0 1h1v1h-1zM4 1h1v1h-1zM0 2h1v1h-1zM4 2h1v1h-1zM0 3h1v1h-1zM4 3h1v1h-1zM0 4h4v1h-4zM0 5h1v1h-1zM2 5h1v1h-1zM0 6h1v1h-1zM3 6h1v1h-1zM0 7h1v1h-1zM4 7h1v1h-1z"/><path id="g83" d="M1 0h3v1h-3zM0 1h1v1h-1zM4 1h1v1h-1zM0 2h1v1h-1zM1 3h3v1h-3zM4 4h1v1h-1zM4 5h1v1h-1zM0 6h1v1h-1zM4 6h1v1h-1zM1 7h3v1h-3z"/><path id="g84" d="M0 0h5v1h-5zM2 1h1v1h-1zM2 2h1v1h-1zM2 3h1v1h-1zM2 4h1v1h-1zM2 5h1v1h-1zM2 6h1v1h-1zM2 7h1v1h-1z"/><path id="g85" d="M0 0h1v1h-1zM4 0h1v1h-1zM0 1h1v1h-1zM4 1h1v1h-1zM0 2h1v1h-1zM4 2h1v1h-1zM0 3h1v1h-1zM4 3h1v1h-1zM0 4h1v1h-1zM4 4h1v1h-1zM0 5h1v1h-1zM4 5h1v1h-1zM0 6h1v1h-1zM4 6h1v1h-1zM1 7h3v1h-3z"/><path id="g86" d="M0 0h1v1h-1zM4 0h1v1h-1zM0 1h1v1h-1zM4 1h1v1h-1zM0 2h1v1h-1zM4 2h1v1h-1zM0 3h1v1h-1zM4 3h1v1h-1zM0 4h1v1h-1zM4 4h1v1h-1zM0 5h1v1h-1zM4 5h1v1h-1zM1 6h1v1h-1zM3 6h1v1h-1zM2 7h1v1h-1z"/><path id="g87" d="M0 0h1v1h-1zM4 0h1v1h-1zM0 1h1v1h-1zM4 1h1v1h-1zM0 2h1v1h-1zM4 2h1v1h-1zM0 3h1v1h-1zM4 3h1v1h-1zM0 4h1v1h-1zM2 4h1v1h-1zM4 4h1v1h-1zM0 5h1v1h-1zM2 5h1v1h-1zM4 5h1v1h-1zM0 6h1v1h-1zM2 6h1v1h-1zM4 6h1v1h-1zM1 7h1v1h-1zM3 7h1v1h-1z"/><path id="g89" d="M0 0h1v1h-1zM4 0h1v1h-1zM0 1h1v1h-1zM4 1h1v1h-1zM0 2h1v1h-1zM4 2h1v1h-1zM1 3h1v1h-1zM3 3h1v1h-1zM2 4h1v1h-1zM2 5h1v1h-1zM2 6h1v1h-1zM2 7h1v1h-1z"/><path id="g97" d="M1 2h3v1h-3zM4 3h1v1h-1zM1 4h4v1h-4zM0 5h1v1h-1zM4 5h1v1h-1zM0 6h1v1h-1zM4 6h1v1h-1zM1 7h4v1h-4z"/><path id="g99" d="M1 2h3v1h-3zM0 3h1v1h-1zM4 3h1v1h-1zM0 4h1v1h-1zM0 5h1v1h-1zM0 6h1v1h-1zM4 6h1v1h-1zM1 7h3v1h-3z"/><path id="g100" d="M4 0h1v1h-1zM4 1h1v1h-1zM1 2h4v1h-4zM0 3h1v1h-1zM4 3h1v1h-1zM0 4h1v1h-1zM4 4h1v1h-1zM0 5h1v1h-1zM4 5h1v1h-1zM0 6h1v1h-1zM4 6h1v1h-1zM1 7h4v1h-4z"/><path id="g101" d="M1 2h3v1h-3zM0 3h1v1h-1zM4 3h1v1h-1zM0 4h5v1h-5zM0 5h1v1h-1zM0 6h1v1h-1zM1 7h4v1h-4z"/><path id="g102" d="M2 0h2v1h-2zM1 1h1v1h-1zM1 2h1v1h-1zM0 3h3v1h-3zM1 4h1v1h-1zM1 5h1v1h-1zM1 6h1v1h-1zM1 7h1v1h-1z"/><path id="g104" d="M0 0h1v1h-1zM0 1h1v1h-1zM0 2h4v1h-4zM0 3h1v1h-1zM4 3h1v1h-1zM0 4h1v1h-1zM4 4h1v1h-1zM0 5h1v1h-1zM4 5h1v1h-1zM0 6h1v1h-1zM4 6h1v1h-1zM0 7h1v1h-1zM4 7h1v1h-1z"/><path id="g105" d="M2 0h1v1h-1zM1 2h2v1h-2zM2 3h1v1h-1zM2 4h1v1h-1zM2 5h1v1h-1zM2 6h1v1h-1zM1 7h3v1h-3z"/><path id="g107" d="M0 0h1v1h-1zM0 1h1v1h-1zM0 2h1v1h-1zM3 2h1v1h-1zM0 3h1v1h-1zM2 3h1v1h-1zM0 4h2v1h-2zM0 5h2v1h-2zM0 6h1v1h-1zM2 6h1v1h-1zM0 7h1v1h-1zM3 7h1v1h-1z"/><path id="g108" d="M1 0h2v1h-2zM2 1h1v1h-1zM2 2h1v1h-1zM2 3h1v1h-1zM2 4h1v1h-1zM2 5h1v1h-1zM2 6h1v1h-1zM1 7h3v1h-3z"/><path id="g109" d="M0 2h2v1h-2zM3 2h1v1h-1zM0 3h1v1h-1zM2 3h1v1h-1zM4 3h1v1h-1zM0 4h1v1h-1zM2 4h1v1h-1zM4 4h1v1h-1zM0 5h1v1h-1zM2 5h1v1h-1zM4 5h1v1h-1zM0 6h1v1h-1zM2 6h1v1h-1zM4 6h1v1h-1zM0 7h1v1h-1zM2 7h1v1h-1zM4 7h1v1h-1z"/><path id="g110" d="M0 2h4v1h-4zM0 3h1v1h-1zM4 3h1v1h-1zM0 4h1v1h-1zM4 4h1v1h-1zM0 5h1v1h-1zM4 5h1v1h-1zM0 6h1v1h-1zM4 6h1v1h-1zM0 7h1v1h-1zM4 7h1v1h-1z"/><path id="g111" d="M1 2h3v1h-3zM0 3h1v1h-1zM4 3h1v1h-1zM0 4h1v1h-1zM4 4h1v1h-1zM0 5h1v1h-1zM4 5h1v1h-1zM0 6h1v1h-1zM4 6h1v1h-1zM1 7h3v1h-3z"/><path id="g112" d="M0 2h4v1h-4zM0 3h1v1h-1zM4 3h1v1h-1zM0 4h1v1h-1zM4 4h1v1h-1zM0 5h1v1h-1zM4 5h1v1h-1zM0 6h1v1h-1zM4 6h1v1h-1zM0 7h4v1h-4zM0 8h1v1h-1zM0 9h1v1h-1z"/><path id="g114" d="M1 2h3v1h-3zM1 3h1v1h-1zM4 3h1v1h-1zM1 4h1v1h-1zM1 5h1v1h-1zM1 6h1v1h-1zM1 7h1v1h-1z"/><path id="g115" d="M1 2h4v1h-4zM0 3h1v1h-1zM1 4h3v1h-3zM4 5h1v1h-1zM4 6h1v1h-1zM0 7h4v1h-4z"/><path id="g116" d="M1 0h1v1h-1zM1 1h1v1h-1zM0 2h3v1h-3zM1 3h1v1h-1zM1 4h1v1h-1zM1 5h1v1h-1zM1 6h1v1h-1zM4 6h1v1h-1zM2 7h2v1h-2z"/><path id="g117" d="M0 2h1v1h-1zM4 2h1v1h-1zM0 3h1v1h-1zM4 3h1v1h-1zM0 4h1v1h-1zM4 4h1v1h-1zM0 5h1v1h-1zM4 5h1v1h-1zM0 6h1v1h-1zM4 6h1v1h-1zM1 7h4v1h-4z"/><path id="g118" d="M0 2h1v1h-1zM4 2h1v1h-1zM0 3h1v1h-1zM4 3h1v1h-1zM0 4h1v1h-1zM4 4h1v1h-1zM0 5h1v1h-1zM4 5h1v1h-1zM1 6h1v1h-1zM3 6h1v1h-1zM2 7h1v1h-1z"/><path id="g121" d="M0 2h1v1h-1zM4 2h1v1h-1zM0 3h1v1h-1zM4 3h1v1h-1zM0 4h1v1h-1zM4 4h1v1h-1zM0 5h1v1h-1zM4 5h1v1h-1zM0 6h1v1h-1zM4 6h1v1h-1zM1 7h4v1h-4zM4 8h1v1h-1zM0 9h4v1h-4z"/><path id="g48" d="M1 0h3v1h-3zM0 1h1v1h-1zM4 1h1v1h-1zM0 2h1v1h-1zM4 2h1v1h-1zM0 3h1v1h-1zM4 3h1v1h-1zM0 4h1v1h-1zM4 4h1v1h-1zM0 5h1v1h-1zM4 5h1v1h-1zM0 6h1v1h-1zM4 6h1v1h-1zM1 7h3v1h-3z"/><path id="g49" d="M2 0h1v1h-1zM1 1h2v1h-2zM0 2h1v1h-1zM2 2h1v1h-1zM2 3h1v1h-1zM2 4h1v1h-1zM2 5h1v1h-1zM2 6h1v1h-1zM2 7h1v1h-1z"/><path id="g50" d="M1 0h3v1h-3zM0 1h1v1h-1zM4 1h1v1h-1zM4 2h1v1h-1zM3 3h1v1h-1zM2 4h1v1h-1zM1 5h1v1h-1zM0 6h1v1h-1zM0 7h5v1h-5z"/><path id="g51" d="M1 0h3v1h-3zM0 1h1v1h-1zM4 1h1v1h-1zM4 2h1v1h-1zM3 3h1v1h-1zM4 4h1v1h-1zM4 5h1v1h-1zM0 6h1v1h-1zM4 6h1v1h-1zM1 7h3v1h-3z"/><path id="g52" d="M2 0h2v1h-2zM1 1h1v1h-1zM3 1h1v1h-1zM0 2h1v1h-1zM3 2h1v1h-1zM0 3h1v1h-1zM3 3h1v1h-1zM0 4h1v1h-1zM3 4h1v1h-1zM0 5h5v1h-5zM3 6h1v1h-1zM3 7h1v1h-1z"/><path id="g53" d="M0 0h5v1h-5zM0 1h1v1h-1zM0 2h1v1h-1zM0 3h4v1h-4zM4 4h1v1h-1zM4 5h1v1h-1zM0 6h1v1h-1zM4 6h1v1h-1zM1 7h3v1h-3z"/><path id="g54" d="M2 0h3v1h-3zM1 1h1v1h-1zM0 2h1v1h-1zM0 3h4v1h-4zM0 4h1v1h-1zM4 4h1v1h-1zM0 5h1v1h-1zM4 5h1v1h-1zM0 6h1v1h-1zM4 6h1v1h-1zM1 7h3v1h-3z"/><path id="g55" d="M0 0h5v1h-5zM4 1h1v1h-1zM3 2h1v1h-1zM2 3h1v1h-1zM1 4h1v1h-1zM1 5h1v1h-1zM1 6h1v1h-1zM1 7h1v1h-1z"/><path id="g56" d="M1 0h3v1h-3zM0 1h1v1h-1zM4 1h1v1h-1zM0 2h1v1h-1zM4 2h1v1h-1zM1 3h3v1h-3zM0 4h1v1h-1zM4 4h1v1h-1zM0 5h1v1h-1zM4 5h1v1h-1zM0 6h1v1h-1zM4 6h1v1h-1zM1 7h3v1h-3z"/><path id="g57" d="M1 0h3v1h-3zM0 1h1v1h-1zM4 1h1v1h-1zM0 2h1v1h-1zM4 2h1v1h-1zM0 3h1v1h-1zM4 3h1v1h-1zM1 4h4v1h-4zM4 5h1v1h-1zM3 6h1v1h-1zM1 7h2v1h-2z"/><path id="g40" d="M2 0h1v1h-1zM1 1h1v1h-1zM1 2h1v1h-1zM1 3h1v1h-1zM1 4h1v1h-1zM1 5h1v1h-1zM1 6h1v1h-1zM2 7h1v1h-1z"/><path id="g41" d="M1 0h1v1h-1zM2 1h1v1h-1zM2 2h1v1h-1zM2 3h1v1h-1zM2 4h1v1h-1zM2 5h1v1h-1zM2 6h1v1h-1zM1 7h1v1h-1z"/><path id="g45" d="M0 3h4v1h-4z"/><path id="g43" d="M2 1h1v1h-1zM2 2h1v1h-1zM0 3h5v1h-5zM2 4h1v1h-1zM2 5h1v1h-1z"/><path id="g47" d="M4 2h1v1h-1zM3 3h1v1h-1zM2 4h1v1h-1zM1 5h1v1h-1zM0 6h1v1h-1z"/><path id="g58" d="M1 2h2v1h-2zM1 6h2v1h-2z"/><path id="g60" d="M3 0h1v1h-1zM2 1h1v1h-1zM1 2h1v1h-1zM0 3h1v1h-1zM1 4h1v1h-1zM2 5h1v1h-1zM3 6h1v1h-1z"/><path id="g62" d="M1 0h1v1h-1zM2 1h1v1h-1zM3 2h1v1h-1zM4 3h1v1h-1zM3 4h1v1h-1zM2 5h1v1h-1zM1 6h1v1h-1z"/></defs><g fill="#000"><use href="#g70" x="11" y="23"/><use href="#g73" x="17" y="23"/><use href="#g76" x="23" y="23"/><use href="#g69" x="29" y="23"/><use href="#g86" x="55" y="23"/><use href="#g73" x="61" y="23"/><use href="#g69" x="67" y="23"/><use href="#g87" x="73" y="23"/><use href="#g69" x="99" y="23"/><use href="#g68" x="105" y="23"/><use href="#g73" x="111" y="23"/><use href="#g84" x="117" y="23"/><use href="#g83" x="143" y="23"/><use href="#g69" x="149" y="23"/><use href="#g84" x="155" y="23"/><use href="#g85" x="161" y="23"/><use href="#g80" x="167" y="23"/><use href="#g72" x="193" y="23"/><use href="#g69" x="199" y="23"/><use href="#g76" x="205" y="23"/><use href="#g80" x="211" y="23"/><use href="#g60" x="252" y="733"/><use href="#g60" x="258" y="733"/><use href="#g83" x="295" y="733"/><use href="#g84" x="301" y="733"/><use href="#g79" x="307" y="733"/><use href="#g80" x="313" y="733"/><use href="#g80" x="344" y="733"/><use href="#g76" x="350" y="733"/><use href="#g65" x="356" y="733"/><use href="#g89" x="362" y="733"/><use href="#g62" x="399" y="733"/><use href="#g62" x="405" y="733"/><use href="#g49" x="441" y="734"/><use href="#g52" x="447" y="734"/><use href="#g53" x="453" y="734"/><use href="#g70" x="671" y="23"/><use href="#g73" x="677" y="23"/><use href="#g76" x="683" y="23"/><use href="#g69" x="689" y="23"/><use href="#g86" x="715" y="23"/><use href="#g73" x="721" y="23"/><use href="#g69" x="727" y="23"/><use href="#g87" x="733" y="23"/><use href="#g69" x="759" y="23"/><use href="#g68" x="765" y="23"/><use href="#g73" x="771" y="23"/><use href="#g84" x="777" y="23"/><use href="#g83" x="803" y="23"/><use href="#g69" x="809" y="23"/><use href="#g84" x="815" y="23"/><use href="#g85" x="821" y="23"/><use href="#g80" x="827" y="23"/><use href="#g72" x="853" y="23"/><use href="#g69" x="859" y="23"/><use href="#g76" x="865" y="23"/><use href="#g80" x="871" y="23"/><use href="#g60" x="912" y="733"/><use href="#g60" x="918" y="733"/><use href="#g83" x="955" y="733"/><use href="#g84" x="961" y="733"/><use href="#g79" x="967" y="733"/><use href="#g80" x="973" y="733"/><use href="#g80" x="1004" y="733"/><use href="#g76" x="1010" y="733"/><use href="#g65" x="1016" y="733"/><use href="#g89" x="1022" y="733"/><use href="#g62" x="1059" y="733"/><use href="#g62" x="1065" y="733"/><use href="#g49" x="1101" y="734"/><use href="#g52" x="1107" y="734"/><use href="#g53" x="1113" y="734"/><use href="#g73" x="83" y="58"/><use href="#g110" x="89" y="58"/><use href="#g115" x="95" y="58"/><use href="#g116" x="101" y="58"/><use href="#g114" x="107" y="58"/><use href="#g117" x="113" y="58"/><use href="#g109" x="119" y="58"/><use href="#g101" x="125" y="58"/><use href="#g110" x="131" y="58"/><use href="#g116" x="137" y="58"/><use href="#g40" x="149" y="58"/><use href="#g48" x="155" y="58"/><use href="#g48" x="161" y="58"/><use href="#g48" x="167" y="58"/><use href="#g41" x="173" y="58"/><use href="#g77" x="83" y="93"/><use href="#g105" x="89" y="93"/><use href="#g100" x="95" y="93"/><use href="#g105" x="101" y="93"/><use href="#g99" x="113" y="93"/><use href="#g104" x="119" y="93"/><use href="#g110" x="125" y="93"/><use href="#g40" x="149" y="93"/><use href="#g48" x="155" y="93"/><use href="#g48" x="161" y="93"/><use href="#g49" x="167" y="93"/><use href="#g41" x="173" y="93"/><use href="#g78" x="83" y="128"/><use href="#g111" x="89" y="128"/><use href="#g116" x="95" y="128"/><use href="#g101" x="101" y="128"/><use href="#g102" x="113" y="128"/><use href="#g114" x="119" y="128"/><use href="#g111" x="125" y="128"/><use href="#g109" x="131" y="128"/><use href="#g40" x="149" y="128"/><use href="#g48" x="155" y="128"/><use href="#g48" x="161" y="128"/><use href="#g49" x="167" y="128"/><use href="#g41" x="173" y="128"/><use href="#g78" x="83" y="163"/><use href="#g111" x="89" y="163"/><use href="#g116" x="95" y="163"/><use href="#g101" x="101" y="163"/><use href="#g116" x="113" y="163"/><use href="#g111" x="119" y="163"/><use href="#g40" x="149" y="163"/><use href="#g49" x="155" y="163"/><use href="#g50" x="161" y="163"/><use href="#g56" x="167" y="163"/><use href="#g41" x="173" y="163"/><use href="#g86" x="83" y="198"/><use href="#g111" x="89" y="198"/><use href="#g108" x="95" y="198"/><use href="#g117" x="101" y="198"/><use href="#g109" x="107" y="198"/><use href="#g101" x="113" y="198"/><use href="#g40" x="149" y="198"/><use href="#g48" x="155" y="198"/><use href="#g56" x="161" y="198"/><use href="#g54" x="167" y="198"/><use href="#g41" x="173" y="198"/><use href="#g76" x="83" y="233"/><use href="#g47" x="89" y="233"/><use href="#g82" x="95" y="233"/><use href="#g112" x="107" y="233"/><use href="#g104" x="113" y="233"/><use href="#g97" x="119" y="233"/><use href="#g115" x="125" y="233"/><use href="#g101" x="131" y="233"/><use href="#g40" x="149" y="233"/><use href="#g48" x="155" y="233"/><use href="#g48" x="161" y="233"/><use href="#g49" x="167" y="233"/><use href="#g41" x="173" y="233"/><use href="#g76" x="83" y="268"/><use href="#g47" x="89" y="268"/><use href="#g82" x="95" y="268"/><use href="#g116" x="107" y="268"/><use href="#g117" x="113" y="268"/><use href="#g110" x="119" y="268"/><use href="#g101" x="125" y="268"/><use href="#g40" x="149" y="268"/><use href="#g48" x="155" y="268"/><use href="#g48" x="161" y="268"/><use href="#g49" x="167" y="268"/><use href="#g41" x="173" y="268"/><use href="#g76" x="83" y="303"/><use href="#g47" x="89" y="303"/><use href="#g82" x="95" y="303"/><use href="#g112" x="107" y="303"/><use href="#g97" x="113" y="303"/><use href="#g110" x="119" y="303"/><use href="#g40" x="149" y="303"/><use href="#g48" x="155" y="303"/><use href="#g53" x="161" y="303"/><use href="#g48" x="167" y="303"/><use href="#g41" x="173" y="303"/><use href="#g84" x="83" y="338"/><use href="#g114" x="89" y="338"/><use href="#g97" x="95" y="338"/><use href="#g110" x="101" y="338"/><use href="#g115" x="107" y="338"/><use href="#g112" x="113" y="338"/><use href="#g111" x="119" y="338"/><use href="#g115" x="125" y="338"/><use href="#g101" x="131" y="338"/><use href="#g40" x="143" y="338"/><use href="#g43" x="149" y="338"/><use href="#g48" x="155" y="338"/><use href="#g48" x="161" y="338"/><use href="#g48" x="167" y="338"/><use href="#g41" x="173" y="338"/><use href="#g69" x="188" y="58"/><use href="#g110" x="194" y="58"/><use href="#g118" x="200" y="58"/><use href="#g101" x="206" y="58"/><use href="#g108" x="212" y="58"/><use href="#g111" x="218" y="58"/><use href="#g112" x="224" y="58"/><use href="#g101" x="230" y="58"/><use href="#g65" x="187" y="128"/><use href="#g116" x="193" y="128"/><use href="#g116" x="199" y="128"/><use href="#g97" x="205" y="128"/><use href="#g99" x="211" y="128"/><use href="#g107" x="217" y="128"/><use href="#g45" x="223" y="128"/><use href="#g49" x="229" y="128"/><use href="#g68" x="241" y="128"/><use href="#g101" x="247" y="128"/><use href="#g108" x="253" y="128"/><use href="#g97" x="259" y="128"/><use href="#g121" x="265" y="128"/><use href="#g40" x="277" y="128"/><use href="#g48" x="283" y="128"/><use href="#g48" x="289" y="128"/><use href="#g50" x="295" y="128"/><use href="#g48" x="301" y="128"/><use href="#g41" x="307" y="128"/><use href="#g65" x="187" y="163"/><use href="#g116" x="193" y="163"/><use href="#g116" x="199" y="163"/><use href="#g97" x="205" y="163"/><use href="#g99" x="211" y="163"/><use href="#g107" x="217" y="163"/><use href="#g45" x="223" y="163"/><use href="#g49" x="229" y="163"/><use href="#g76" x="241" y="163"/><use href="#g101" x="247" y="163"/><use href="#g118" x="253" y="163"/><use href="#g101" x="259" y="163"/><use href="#g108" x="265" y="163"/><use href="#g40" x="277" y="163"/><use href="#g48" x="283" y="163"/><use href="#g55" x="289" y="163"/><use href="#g48" x="295" y="163"/><use href="#g48" x="301" y="163"/><use href="#g41" x="307" y="163"/><use href="#g65" x="187" y="198"/><use href="#g116" x="193" y="198"/><use href="#g116" x="199" y="198"/><use href="#g97" x="205" y="198"/><use href="#g99" x="211" y="198"/><use href="#g107" x="217" y="198"/><use href="#g45" x="223" y="198"/><use href="#g50" x="229" y="198"/><use href="#g68" x="241" y="198"/><use href="#g101" x="247" y="198"/><use href="#g108" x="253" y="198"/><use href="#g97" x="259" y="198"/><use href="#g121" x="265" y="198"/><use href="#g40" x="277" y="198"/><use href="#g48" x="283" y="198"/><use href="#g48" x="289" y="198"/><use href="#g53" x="295" y="198"/><use href="#g48" x="301" y="198"/><use href="#g41" x="307" y="198"/><use href="#g65" x="187" y="233"/><use href="#g116" x="193" y="233"/><use href="#g116" x="199" y="233"/><use href="#g97" x="205" y="233"/><use href="#g99" x="211" y="233"/><use href="#g107" x="217" y="233"/><use href="#g45" x="223" y="233"/><use href="#g50" x="229" y="233"/><use href="#g76" x="241" y="233"/><use href="#g101" x="247" y="233"/><use href="#g118" x="253" y="233"/><use href="#g101" x="259" y="233"/><use href="#g108" x="265" y="233"/><use href="#g40" x="277" y="233"/><use href="#g48" x="283" y="233"/><use href="#g54" x="289" y="233"/><use href="#g48" x="295" y="233"/><use href="#g48" x="301" y="233"/><use href="#g41" x="307" y="233"/><use href="#g83" x="187" y="268"/><use href="#g117" x="193" y="268"/><use href="#g115" x="199" y="268"/><use href="#g116" x="205" y="268"/><use href="#g97" x="211" y="268"/><use href="#g105" x="217" y="268"/><use href="#g110" x="223" y="268"/><use href="#g68" x="235" y="268"/><use href="#g101" x="241" y="268"/><use href="#g108" x="247" y="268"/><use href="#g97" x="253" y="268"/><use href="#g121" x="259" y="268"/><use href="#g40" x="277" y="268"/><use href="#g48" x="283" y="268"/><use href="#g48" x="289" y="268"/><use href="#g53" x="295" y="268"/><use href="#g48" x="301" y="268"/><use href="#g41" x="307" y="268"/><use href="#g83" x="187" y="303"/><use href="#g117" x="193" y="303"/><use href="#g115" x="199" y="303"/><use href="#g116" x="205" y="303"/><use href="#g97" x="211" y="303"/><use href="#g105" x="217" y="303"/><use href="#g110" x="223" y="303"/><use href="#g76" x="235" y="303"/><use href="#g101" x="241" y="303"/><use href="#g118" x="247" y="303"/><use href="#g101" x="253" y="303"/><use href="#g108" x="259" y="303"/><use href="#g40" x="277" y="303"/><use href="#g48" x="283" y="303"/><use href="#g53" x="289" y="303"/><use href="#g48" x="295" y="303"/><use href="#g48" x="301" y="303"/><use href="#g41" x="307" y="303"/><use href="#g82" x="187" y="338"/><use href="#g101" x="193" y="338"/><use href="#g108" x="199" y="338"/><use href="#g101" x="205" y="338"/><use href="#g97" x="211" y="338"/><use href="#g115" x="217" y="338"/><use href="#g101" x="223" y="338"/><use href="#g68" x="235" y="338"/><use href="#g101" x="241" y="338"/><use href="#g108" x="247" y="338"/><use href="#g97" x="253" y="338"/><use href="#g121" x="259" y="338"/><use href="#g40" x="277" y="338"/><use href="#g48" x="283" y="338"/><use href="#g48" x="289" y="338"/><use href="#g56" x="295" y="338"/><use href="#g48" x="301" y="338"/><use href="#g41" x="307" y="338"/><use href="#g87" x="330" y="60"/><use href="#g97" x="336" y="60"/><use href="#g118" x="342" y="60"/><use href="#g101" x="348" y="60"/><use href="#g102" x="354" y="60"/><use href="#g111" x="360" y="60"/><use href="#g114" x="366" y="60"/><use href="#g109" x="372" y="60"/><use href="#g87" x="398" y="60"/><use href="#g97" x="404" y="60"/><use href="#g118" x="410" y="60"/><use href="#g101" x="416" y="60"/><use href="#g102" x="422" y="60"/><use href="#g105" x="428" y="60"/><use href="#g108" x="434" y="60"/><use href="#g101" x="440" y="60"/><use href="#g79" x="322" y="255"/><use href="#g83" x="328" y="255"/><use href="#g67" x="334" y="255"/><use href="#g45" x="340" y="255"/><use href="#g48" x="346" y="255"/><use href="#g49" x="352" y="255"/><use href="#g83" x="372" y="255"/><use href="#g105" x="378" y="255"/><use href="#g110" x="384" y="255"/><use href="#g101" x="390" y="255"/><use href="#g86" x="412" y="255"/><use href="#g111" x="418" y="255"/><use href="#g108" x="424" y="255"/><use href="#g117" x="430" y="255"/><use href="#g109" x="436" y="255"/><use href="#g101" x="442" y="255"/><use href="#g40" x="454" y="255"/><use href="#g49" x="460" y="255"/><use href="#g57" x="466" y="255"/><use href="#g50" x="472" y="255"/><use href="#g41" x="478" y="255"/><use href="#g79" x="322" y="275"/><use href="#g83" x="328" y="275"/><use href="#g67" x="334" y="275"/><use href="#g45" x="340" y="275"/><use href="#g48" x="346" y="275"/><use href="#g50" x="352" y="275"/><use href="#g83" x="372" y="275"/><use href="#g105" x="378" y="275"/><use href="#g110" x="384" y="275"/><use href="#g101" x="390" y="275"/><use href="#g86" x="412" y="275"/><use href="#g111" x="418" y="275"/><use href="#g108" x="424" y="275"/><use href="#g117" x="430" y="275"/><use href="#g109" x="436" y="275"/><use href="#g101" x="442" y="275"/><use href="#g40" x="454" y="275"/><use href="#g48" x="460" y="275"/><use href="#g57" x="466" y="275"/><use href="#g54" x="472" y="275"/><use href="#g41" x="478" y="275"/><use href="#g79" x="322" y="295"/><use href="#g83" x="328" y="295"/><use href="#g67" x="334" y="295"/><use href="#g45" x="340" y="295"/><use href="#g48" x="346" y="295"/><use href="#g51" x="352" y="295"/><use href="#g83" x="372" y="295"/><use href="#g105" x="378" y="295"/><use href="#g110" x="384" y="295"/><use href="#g101" x="390" y="295"/><use href="#g86" x="412" y="295"/><use href="#g111" x="418" y="295"/><use href="#g108" x="424" y="295"/><use href="#g117" x="430" y="295"/><use href="#g109" x="436" y="295"/><use href="#g101" x="442" y="295"/><use href="#g40" x="454" y="295"/><use href="#g48" x="460" y="295"/><use href="#g51" x="466" y="295"/><use href="#g50" x="472" y="295"/><use href="#g41" x="478" y="295"/><use href="#g79" x="322" y="315"/><use href="#g83" x="328" y="315"/><use href="#g67" x="334" y="315"/><use href="#g45" x="340" y="315"/><use href="#g48" x="346" y="315"/><use href="#g52" x="352" y="315"/><use href="#g83" x="372" y="315"/><use href="#g105" x="378" y="315"/><use href="#g110" x="384" y="315"/><use href="#g101" x="390" y="315"/><use href="#g86" x="412" y="315"/><use href="#g111" x="418" y="315"/><use href="#g108" x="424" y="315"/><use href="#g117" x="430" y="315"/><use href="#g109" x="436" y="315"/><use href="#g101" x="442" y="315"/><use href="#g40" x="454" y="315"/><use href="#g48" x="460" y="315"/><use href="#g49" x="466" y="315"/><use href="#g54" x="472" y="315"/><use href="#g41" x="478" y="315"/><use href="#g79" x="322" y="335"/><use href="#g83" x="328" y="335"/><use href="#g67" x="334" y="335"/><use href="#g45" x="340" y="335"/><use href="#g48" x="346" y="335"/><use href="#g53" x="352" y="335"/><use href="#g83" x="372" y="335"/><use href="#g105" x="378" y="335"/><use href="#g110" x="384" y="335"/><use href="#g101" x="390" y="335"/><use href="#g86" x="412" y="335"/><use href="#g111" x="418" y="335"/><use href="#g108" x="424" y="335"/><use href="#g117" x="430" y="335"/><use href="#g109" x="436" y="335"/><use href="#g101" x="442" y="335"/><use href="#g40" x="454" y="335"/><use href="#g48" x="460" y="335"/><use href="#g54" x="466" y="335"/><use href="#g52" x="472" y="335"/><use href="#g41" x="478" y="335"/><use href="#g79" x="322" y="355"/><use href="#g83" x="328" y="355"/><use href="#g67" x="334" y="355"/><use href="#g45" x="340" y="355"/><use href="#g48" x="346" y="355"/><use href="#g54" x="352" y="355"/><use href="#g83" x="372" y="355"/><use href="#g105" x="378" y="355"/><use href="#g110" x="384" y="355"/><use href="#g101" x="390" y="355"/><use href="#g86" x="412" y="355"/><use href="#g111" x="418" y="355"/><use href="#g108" x="424" y="355"/><use href="#g117" x="430" y="355"/><use href="#g109" x="436" y="355"/><use href="#g101" x="442" y="355"/><use href="#g40" x="454" y="355"/><use href="#g48" x="460" y="355"/><use href="#g48" x="466" y="355"/><use href="#g52" x="472" y="355"/><use href="#g41" x="478" y="355"/><use href="#g73" x="59" y="405"/><use href="#g110" x="65" y="405"/><use href="#g115" x="71" y="405"/><use href="#g58" x="77" y="405"/><use href="#g48" x="83" y="405"/><use href="#g48" x="89" y="405"/><use href="#g48" x="95" y="405"/><use href="#g77" x="55" y="435"/><use href="#g105" x="61" y="435"/><use href="#g100" x="67" y="435"/><use href="#g105" x="73" y="435"/><use href="#g67" x="79" y="435"/><use href="#g104" x="85" y="435"/><use href="#g58" x="91" y="435"/><use href="#g48" x="97" y="435"/><use href="#g49" x="103" y="435"/><use href="#g76" x="53" y="477"/><use href="#g47" x="59" y="477"/><use href="#g82" x="65" y="477"/><use href="#g40" x="83" y="477"/><use href="#g48" x="89" y="477"/><use href="#g53" x="95" y="477"/><use href="#g48" x="101" y="477"/><use href="#g41" x="107" y="477"/><use href="#g40" x="65" y="522"/><use href="#g48" x="71" y="522"/><use href="#g56" x="77" y="522"/><use href="#g54" x="83" y="522"/><use href="#g41" x="89" y="522"/><use href="#g86" x="71" y="642"/><use href="#g111" x="77" y="642"/><use href="#g108" x="83" y="642"/><use href="#g109" x="53" y="661"/><use href="#g117" x="59" y="661"/><use href="#g116" x="65" y="661"/><use href="#g101" x="71" y="661"/><use href="#g115" x="86" y="661"/><use href="#g111" x="92" y="661"/><use href="#g108" x="98" y="661"/><use href="#g111" x="104" y="661"/><use href="#g73" x="129" y="405"/><use href="#g110" x="135" y="405"/><use href="#g115" x="141" y="405"/><use href="#g58" x="147" y="405"/><use href="#g48" x="153" y="405"/><use href="#g48" x="159" y="405"/><use href="#g49" x="165" y="405"/><use href="#g77" x="125" y="435"/><use href="#g105" x="131" y="435"/><use href="#g100" x="137" y="435"/><use href="#g105" x="143" y="435"/><use href="#g67" x="149" y="435"/><use href="#g104" x="155" y="435"/><use href="#g58" x="161" y="435"/><use href="#g48" x="167" y="435"/><use href="#g49" x="173" y="435"/><use href="#g76" x="123" y="477"/><use href="#g47" x="129" y="477"/><use href="#g82" x="135" y="477"/><use href="#g40" x="153" y="477"/><use href="#g48" x="159" y="477"/><use href="#g53" x="165" y="477"/><use href="#g48" x="171" y="477"/><use href="#g41" x="177" y="477"/><use href="#g40" x="135" y="522"/><use href="#g48" x="141" y="522"/><use href="#g51" x="147" y="522"/><use href="#g51" x="153" y="522"/><use href="#g41" x="159" y="522"/><use href="#g86" x="141" y="642"/><use href="#g111" x="147" y="642"/><use href="#g108" x="153" y="642"/><use href="#g109" x="123" y="661"/><use href="#g117" x="129" y="661"/><use href="#g116" x="135" y="661"/><use href="#g101" x="141" y="661"/><use href="#g115" x="156" y="661"/><use href="#g111" x="162" y="661"/><use href="#g108" x="168" y="661"/><use href="#g111" x="174" y="661"/><use href="#g73" x="199" y="405"/><use href="#g110" x="205" y="405"/><use href="#g115" x="211" y="405"/><use href="#g58" x="217" y="405"/><use href="#g48" x="223" y="405"/><use href="#g48" x="229" y="405"/><use href="#g50" x="235" y="405"/><use href="#g77" x="195" y="435"/><use href="#g105" x="201" y="435"/><use href="#g100" x="207" y="435"/><use href="#g105" x="213" y="435"/><use href="#g67" x="219" y="435"/><use href="#g104" x="225" y="435"/><use href="#g58" x="231" y="435"/><use href="#g48" x="237" y="435"/><use href="#g49" x="243" y="435"/><use href="#g76" x="193" y="477"/><use href="#g47" x="199" y="477"/><use href="#g82" x="205" y="477"/><use href="#g40" x="223" y="477"/><use href="#g48" x="229" y="477"/><use href="#g53" x="235" y="477"/><use href="#g48" x="241" y="477"/><use href="#g41" x="247" y="477"/><use href="#g40" x="205" y="522"/><use href="#g48" x="211" y="522"/><use href="#g52" x="217" y="522"/><use href="#g52" x="223" y="522"/><use href="#g41" x="229" y="522"/><use href="#g86" x="211" y="642"/><use href="#g111" x="217" y="642"/><use href="#g108" x="223" y="642"/><use href="#g109" x="193" y="661"/><use href="#g117" x="199" y="661"/><use href="#g116" x="205" y="661"/><use href="#g101" x="211" y="661"/><use href="#g115" x="226" y="661"/><use href="#g111" x="232" y="661"/><use href="#g108" x="238" y="661"/><use href="#g111" x="244" y="661"/><use href="#g73" x="269" y="405"/><use href="#g110" x="275" y="405"/><use href="#g115" x="281" y="405"/><use href="#g58" x="287" y="405"/><use href="#g48" x="293" y="405"/><use href="#g48" x="299" y="405"/><use href="#g51" x="305" y="405"/><use href="#g77" x="265" y="435"/><use href="#g105" x="271" y="435"/><use href="#g100" x="277" y="435"/><use href="#g105" x="283" y="435"/><use href="#g67" x="289" y="435"/><use href="#g104" x="295" y="435"/><use href="#g58" x="301" y="435"/><use href="#g48" x="307" y="435"/><use href="#g49" x="313" y="435"/><use href="#g76" x="263" y="477"/><use href="#g47" x="269" y="477"/><use href="#g82" x="275" y="477"/><use href="#g40" x="293" y="477"/><use href="#g48" x="299" y="477"/><use href="#g53" x="305" y="477"/><use href="#g48" x="311" y="477"/><use href="#g41" x="317" y="477"/><use href="#g40" x="275" y="522"/><use href="#g48" x="281" y="522"/><use href="#g50" x="287" y="522"/><use href="#g49" x="293" y="522"/><use href="#g41" x="299" y="522"/><use href="#g86" x="281" y="642"/><use href="#g111" x="287" y="642"/><use href="#g108" x="293" y="642"/><use href="#g109" x="263" y="661"/><use href="#g117" x="269" y="661"/><use href="#g116" x="275" y="661"/><use href="#g101" x="281" y="661"/><use href="#g115" x="296" y="661"/><use href="#g111" x="302" y="661"/><use href="#g108" x="308" y="661"/><use href="#g111" x="314" y="661"/><use href="#g73" x="339" y="405"/><use href="#g110" x="345" y="405"/><use href="#g115" x="351" y="405"/><use href="#g58" x="357" y="405"/><use href="#g48" x="363" y="405"/><use href="#g48" x="369" y="405"/><use href="#g52" x="375" y="405"/><use href="#g77" x="335" y="435"/><use href="#g105" x="341" y="435"/><use href="#g100" x="347" y="435"/><use href="#g105" x="353" y="435"/><use href="#g67" x="359" y="435"/><use href="#g104" x="365" y="435"/><use href="#g58" x="371" y="435"/><use href="#g48" x="377" y="435"/><use href="#g49" x="383" y="435"/><use href="#g76" x="333" y="477"/><use href="#g47" x="339" y="477"/><use href="#g82" x="345" y="477"/><use href="#g40" x="363" y="477"/><use href="#g48" x="369" y="477"/><use href="#g53" x="375" y="477"/><use href="#g48" x="381" y="477"/><use href="#g41" x="387" y="477"/><use href="#g40" x="345" y="522"/><use href="#g48" x="351" y="522"/><use href="#g55" x="357" y="522"/><use href="#g51" x="363" y="522"/><use href="#g41" x="369" y="522"/><use href="#g86" x="351" y="642"/><use href="#g111" x="357" y="642"/><use href="#g108" x="363" y="642"/><use href="#g109" x="333" y="661"/><use href="#g117" x="339" y="661"/><use href="#g116" x="345" y="661"/><use href="#g101" x="351" y="661"/><use href="#g115" x="366" y="661"/><use href="#g111" x="372" y="661"/><use href="#g108" x="378" y="661"/><use href="#g111" x="384" y="661"/><use href="#g73" x="409" y="405"/><use href="#g110" x="415" y="405"/><use href="#g115" x="421" y="405"/><use href="#g58" x="427" y="405"/><use href="#g48" x="433" y="405"/><use href="#g48" x="439" y="405"/><use href="#g53" x="445" y="405"/><use href="#g77" x="405" y="435"/><use href="#g105" x="411" y="435"/><use href="#g100" x="417" y="435"/><use href="#g105" x="423" y="435"/><use href="#g67" x="429" y="435"/><use href="#g104" x="435" y="435"/><use href="#g58" x="441" y="435"/><use href="#g48" x="447" y="435"/><use href="#g49" x="453" y="435"/><use href="#g76" x="403" y="477"/><use href="#g47" x="409" y="477"/><use href="#g82" x="415" y="477"/><use href="#g40" x="433" y="477"/><use href="#g48" x="439" y="477"/><use href="#g53" x="445" y="477"/><use href="#g48" x="451" y="477"/><use href="#g41" x="457" y="477"/><use href="#g40" x="415" y="522"/><use href="#g48" x="421" y="522"/><use href="#g50" x="427" y="522"/><use href="#g55" x="433" y="522"/><use href="#g41" x="439" y="522"/><use href="#g86" x="421" y="642"/><use href="#g111" x="427" y="642"/><use href="#g108" x="433" y="642"/><use href="#g109" x="403" y="661"/><use href="#g117" x="409" y="661"/><use href="#g116" x="415" y="661"/><use href="#g101" x="421" y="661"/><use href="#g115" x="436" y="661"/><use href="#g111" x="442" y="661"/><use href="#g108" x="448" y="661"/><use href="#g111" x="454" y="661"/><use href="#g73" x="479" y="405"/><use href="#g110" x="485" y="405"/><use href="#g115" x="491" y="405"/><use href="#g58" x="497" y="405"/><use href="#g48" x="503" y="405"/><use href="#g48" x="509" y="405"/><use href="#g54" x="515" y="405"/><use href="#g77" x="475" y="435"/><use href="#g105" x="481" y="435"/><use href="#g100" x="487" y="435"/><use href="#g105" x="493" y="435"/><use href="#g67" x="499" y="435"/><use href="#g104" x="505" y="435"/><use href="#g58" x="511" y="435"/><use href="#g48" x="517" y="435"/><use href="#g49" x="523" y="435"/><use href="#g76" x="473" y="477"/><use href="#g47" x="479" y="477"/><use href="#g82" x="485" y="477"/><use href="#g40" x="503" y="477"/><use href="#g48" x="509" y="477"/><use href="#g53" x="515" y="477"/><use href="#g48" x="521" y="477"/><use href="#g41" x="527" y="477"/><use href="#g40" x="485" y="522"/><use href="#g48" x="491" y="522"/><use href="#g55" x="497" y="522"/><use href="#g55" x="503" y="522"/><use href="#g41" x="509" y="522"/><use href="#g86" x="491" y="642"/><use href="#g111" x="497" y="642"/><use href="#g108" x="503" y="642"/><use href="#g109" x="473" y="661"/><use href="#g117" x="479" y="661"/><use href="#g116" x="485" y="661"/><use href="#g101" x="491" y="661"/><use href="#g115" x="506" y="661"/><use href="#g111" x="512" y="661"/><use href="#g108" x="518" y="661"/><use href="#g111" x="524" y="661"/><use href="#g40" x="563" y="404"/><use href="#g48" x="569" y="404"/><use href="#g48" x="575" y="404"/><use href="#g48" x="581" y="404"/><use href="#g41" x="587" y="404"/><use href="#g69" x="566" y="524"/><use href="#g99" x="572" y="524"/><use href="#g104" x="578" y="524"/><use href="#g111" x="584" y="524"/><use href="#g40" x="563" y="544"/><use href="#g48" x="569" y="544"/><use href="#g54" x="575" y="544"/><use href="#g52" x="581" y="544"/><use href="#g41" x="587" y="544"/><use href="#g77" x="566" y="664"/><use href="#g97" x="572" y="664"/><use href="#g105" x="578" y="664"/><use href="#g110" x="584" y="664"/><use href="#g84" x="687" y="53"/><use href="#g114" x="693" y="53"/><use href="#g97" x="699" y="53"/><use href="#g99" x="705" y="53"/><use href="#g107" x="711" y="53"/><use href="#g58" x="717" y="53"/><use href="#g48" x="723" y="53"/><use href="#g48" x="729" y="53"/><use href="#g51" x="735" y="53"/><use href="#g81" x="753" y="53"/><use href="#g117" x="759" y="53"/><use href="#g97" x="765" y="53"/><use href="#g114" x="771" y="53"/><use href="#g116" x="777" y="53"/><use href="#g101" x="783" y="53"/><use href="#g114" x="789" y="53"/><use href="#g58" x="795" y="53"/><use href="#g48" x="801" y="53"/><use href="#g48" x="807" y="53"/><use href="#g48" x="813" y="53"/><use href="#g49" x="819" y="53"/><use href="#g83" x="837" y="53"/><use href="#g116" x="843" y="53"/><use href="#g97" x="849" y="53"/><use href="#g102" x="855" y="53"/><use href="#g102" x="861" y="53"/><use href="#g58" x="867" y="53"/><use href="#g52" x="873" y="53"/><use href="#g47" x="879" y="53"/><use href="#g52" x="885" y="53"/><use href="#g75" x="903" y="53"/><use href="#g101" x="909" y="53"/><use href="#g121" x="915" y="53"/><use href="#g58" x="921" y="53"/><use href="#g67" x="927" y="53"/><use href="#g97" x="939" y="53"/></g><g fill="#eaffff"><g transform="translate(0,0)"><path d="M313 5h1v7h-1zM319 5h1v7h-1zM314 6h1v1h-1zM315 7h1v1h-1zM316 8h1v1h-1zM317 7h1v1h-1zM318 6h1v1h-1zM324 5h3v1h-3zM325 6h1v5h-1zM324 11h3v1h-3zM331 5h6v1h-6zM331 6h1v5h-1zM337 6h1v5h-1zM331 11h6v1h-6zM342 5h3v1h-3zM343 6h1v5h-1zM342 11h3v1h-3z"/></g><g transform="translate(660,0)"><path d="M313 5h1v7h-1zM319 5h1v7h-1zM314 6h1v1h-1zM315 7h1v1h-1zM316 8h1v1h-1zM317 7h1v1h-1zM318 6h1v1h-1zM324 5h3v1h-3zM325 6h1v5h-1zM324 11h3v1h-3zM331 5h6v1h-6zM331 6h1v5h-1zM337 6h1v5h-1zM331 11h6v1h-6zM342 5h3v1h-3zM343 6h1v5h-1zM342 11h3v1h-3z"/></g></g></svg></body></html>
